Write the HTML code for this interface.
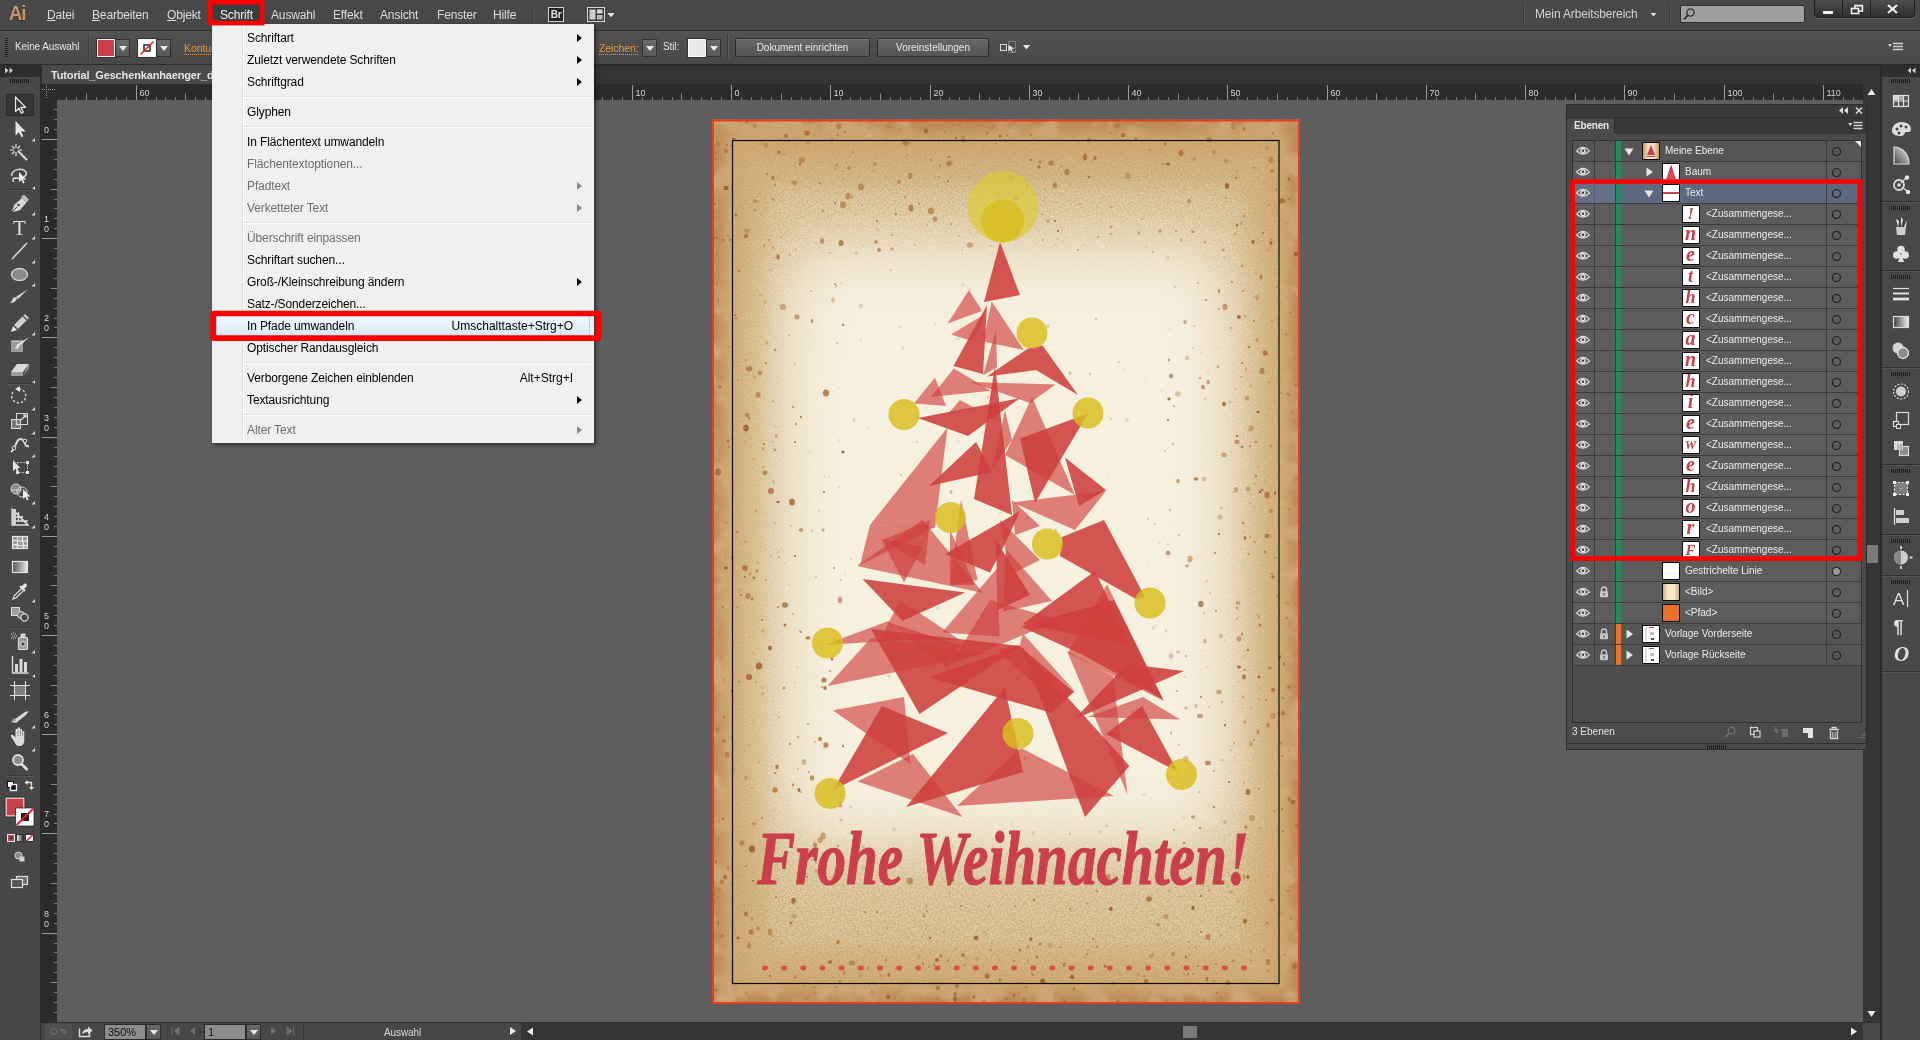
<!DOCTYPE html>
<html lang="de"><head><meta charset="utf-8"><title>Adobe Illustrator – Tutorial_Geschenkanhaenger</title>
<style>
html,body{margin:0;padding:0;}
body{width:1920px;height:1040px;overflow:hidden;background:#5e5e5e;position:relative;font-family:"Liberation Sans",sans-serif;font-size:12px;color:#e0e0e0;}
.a{position:absolute;}
svg{position:absolute;overflow:visible;}

.mb{left:0;top:0;width:1920px;height:30px;background:#484848;border-bottom:1px solid #2c2c2c;}
.mi{position:absolute;top:8px;font-size:12px;color:#dcdcdc;white-space:nowrap;line-height:15px;letter-spacing:-0.15px;}
.mi u{text-decoration:underline;text-underline-offset:1px;}
.cb{left:0;top:31px;width:1920px;height:33px;background:linear-gradient(#525252,#484848);border-bottom:1px solid #2a2a2a;}
.ct{position:absolute;font-size:10px;color:#e4e4e4;white-space:nowrap;line-height:12px;letter-spacing:-0.1px;}
.or{color:#e8963a;border-bottom:1px dotted #e8963a;}
.dd{position:absolute;background:linear-gradient(#6a6a6a,#585858);border:1px solid #2e2e2e;box-sizing:border-box;}
.dd:after{content:"";position:absolute;left:50%;top:50%;margin:-2px 0 0 -4px;border:4px solid transparent;border-top:5px solid #e8e8e8;border-bottom:0;}
.btn{position:absolute;top:38px;height:19px;box-sizing:border-box;border:1px solid #2b2b2b;border-radius:2px;background:linear-gradient(#676767,#555);color:#e8e8e8;font-size:10px;line-height:17px;text-align:center;box-shadow:inset 0 1px 0 #7a7a7a;}
.tabstrip{left:41px;top:65px;width:1841px;height:19px;background:#343434;}
.tab{left:42px;top:65px;width:290px;height:19px;background:#4a4a4a;}
.tabt{left:51px;top:69px;font-size:11px;font-weight:bold;color:#e6e6e6;white-space:nowrap;line-height:13px;letter-spacing:-0.15px;}
.rul{background:#2b2b2b;}
.rl{position:absolute;font-size:9px;color:#c4c4c4;line-height:9px;}
.vsb{left:1863px;top:84px;width:17px;height:939px;background:#353535;}
.hsb{left:521px;top:1023px;width:1342px;height:17px;background:#353535;}
.sbar{left:41px;top:1023px;width:480px;height:17px;background:#474747;}
.fld{position:absolute;background:#8c8c8c;color:#111;font-size:11px;line-height:15px;box-sizing:border-box;border:1px solid #2c2c2c;padding-left:3px;}
.dock{left:1882px;top:65px;width:38px;height:975px;background:#484848;}


.tb{left:0;top:65px;width:40px;height:975px;background:#474747;border-right:1px solid #2b2b2b;}
.tbh{left:0;top:65px;width:40px;height:12px;background:#2e2e2e;}


.menu{left:212px;top:24px;width:382px;height:419px;box-sizing:border-box;background:#f0f0f0;border:1px solid #ececec;box-shadow:2px 2px 4px rgba(0,0,0,.5);}
.mgut{position:absolute;left:29px;top:2px;width:1px;height:413px;background:#e0e0e0;border-right:1px solid #fff;}
.mit{position:absolute;left:34px;font-size:12px;line-height:22px;height:22px;color:#000;white-space:nowrap;letter-spacing:-0.12px;}
.mit.dis{color:#6d6d6d;}
.msc{position:absolute;right:20px;font-size:12px;line-height:22px;height:22px;color:#000;white-space:nowrap;text-align:right;}
.msep{position:absolute;left:31px;width:347px;height:1px;background:#e0e0e0;border-bottom:1px solid #fff;}
.marr{position:absolute;left:364px;width:0;height:0;border:4px solid transparent;border-left:5px solid #000;border-right:0;}
.marr.dis{border-left-color:#8a8a8a;}
.mhl{position:absolute;left:3px;width:374px;height:22px;box-sizing:border-box;border:1px solid #aecff7;border-radius:3px;background:linear-gradient(#f3f8fe,#dbe8f9);}
.redbox{position:absolute;box-sizing:border-box;border:4px solid #ff0000;}


.lp{left:1566px;top:104px;width:301px;height:646px;background:#4b4b4b;box-sizing:border-box;border:1px solid #2b2b2b;}
.lph{left:1567px;top:105px;width:299px;height:12px;background:#3a3a3a;}
.lpt{left:1567px;top:117px;width:299px;height:17px;background:#383838;border-top:1px solid #2e2e2e;box-sizing:border-box;}
.lptab{left:1567px;top:118px;width:47px;height:16px;background:#4b4b4b;border-right:1px solid #2e2e2e;}
.lpl{left:1572px;top:140px;width:290px;height:583px;box-sizing:border-box;border:1px solid #303030;background:#4e4e4e;}
.lr{position:absolute;left:1573px;width:288px;height:21px;box-sizing:border-box;border-bottom:1px solid #3c3c3c;background:#5c5c5c;}
.lr.sel{background:#5c697f;}
.lr i{position:absolute;top:0;height:20px;display:block;}
.lt{position:absolute;font-size:10px;color:#ececec;white-space:nowrap;line-height:12px;letter-spacing:0px;}
.th{position:absolute;width:18px;height:18px;box-sizing:border-box;border:1px solid #0c0c0c;background:#fff;overflow:hidden;text-align:center;color:#c9404a;font-family:"Liberation Serif",serif;font-style:italic;font-weight:bold;font-size:19px;line-height:14px;}

</style></head><body><div id="app" style="position:absolute;left:0;top:0;width:1920px;height:1040px;will-change:transform">

<div class="a mb"></div>
<div class="a" style="left:9px;top:0px;font-size:21px;line-height:26px;color:#c9976b;font-weight:bold;letter-spacing:-1.2px;text-shadow:0 1px 0 #2a2a2a;transform:scaleX(.88);transform-origin:0 0">Ai</div>
<div class="mi" style="left:47px"><u>D</u>atei</div><div class="mi" style="left:92px"><u>B</u>earbeiten</div><div class="mi" style="left:167px"><u>O</u>bjekt</div><div class="mi" style="left:220px">Schrift</div><div class="mi" style="left:271px">Auswahl</div><div class="mi" style="left:333px">Effekt</div><div class="mi" style="left:380px">Ansicht</div><div class="mi" style="left:437px">Fenster</div><div class="mi" style="left:493px">Hilfe</div>
<div class="a" style="left:532px;top:4px;width:1px;height:22px;background:#3a3a3a;border-right:1px solid #565656"></div>
<div class="a" style="left:548px;top:7px;width:16px;height:15px;box-sizing:border-box;border:1px solid #cfcfcf;background:#262626;color:#e0e0e0;font-size:10px;line-height:13px;text-align:center;font-weight:bold;letter-spacing:-0.3px">Br</div>
<svg class="a" style="left:587px;top:7px" width="30" height="16"><rect x="0.5" y="0.5" width="17" height="14" fill="#3a3a3a" stroke="#d8d8d8"/><rect x="2.5" y="2.5" width="6" height="10" fill="#cfcfcf"/><rect x="10" y="2.5" width="5.5" height="4" fill="#d8d8d8"/><rect x="10" y="8" width="5.5" height="4.5" fill="#bdbdbd"/><path d="M20.5 6h7l-3.5 4.5z" fill="#e6e6e6"/></svg>
<div class="a" style="left:1523px;top:4px;width:1px;height:22px;background:#3a3a3a;border-right:1px solid #565656"></div>
<div class="mi" style="left:1535px;top:7px;color:#d2d2d2">Mein Arbeitsbereich</div>
<svg class="a" style="left:1650px;top:12px" width="8" height="6"><path d="M0.5 1h6l-3 3.5z" fill="#dcdcdc"/></svg>
<div class="a" style="left:1669px;top:4px;width:1px;height:22px;background:#3a3a3a;border-right:1px solid #565656"></div>
<div class="a" style="left:1680px;top:5px;width:125px;height:18px;box-sizing:border-box;background:#9f9f9f;border:1px solid #2e2e2e;border-radius:2px"></div>
<svg class="a" style="left:1682px;top:7px" width="16" height="15"><circle cx="8.5" cy="5.5" r="3.6" fill="none" stroke="#2c2c2c" stroke-width="1.3"/><path d="M6 8.2L2 12.5" stroke="#2c2c2c" stroke-width="1.8"/></svg>
<div class="a" style="left:1814px;top:-1px;width:101px;height:19px;box-sizing:border-box;background:linear-gradient(#4e4e4e,#2e2e2e);border:1px solid #1e1e1e;border-radius:0 0 4px 4px;box-shadow:0 1px 0 #666"></div>
<div class="a" style="left:1842px;top:0;width:1px;height:17px;background:#1e1e1e"></div>
<div class="a" style="left:1870px;top:0;width:1px;height:17px;background:#1e1e1e"></div>
<svg class="a" style="left:1814px;top:0" width="101" height="18"><rect x="9" y="11" width="10" height="3" fill="#f2f2f2"/><rect x="37.5" y="8.5" width="7" height="5" fill="none" stroke="#f2f2f2" stroke-width="1.6"/><path d="M41 8V5.6h7.4v5.4H45" fill="none" stroke="#f2f2f2" stroke-width="1.6"/><path d="M74 5l9 8M83 5l-9 8" stroke="#f2f2f2" stroke-width="2.2"/></svg>

<div class="a cb"></div>
<svg class="a" style="left:5px;top:37px" width="4" height="22"><path d="M0 1.5h3M0 3.5h3M0 5.5h3M0 7.5h3M0 9.5h3M0 11.5h3M0 13.5h3M0 15.5h3M0 17.5h3M0 19.5h3" stroke="#222" stroke-width="1"/></svg>
<div class="ct" style="left:15px;top:41px">Keine Auswahl</div>
<div class="a" style="left:88px;top:34px;width:1px;height:26px;background:#3a3a3a;border-right:1px solid #5a5a5a"></div>
<div class="a" style="left:97px;top:39px;width:18px;height:18px;box-sizing:border-box;background:#c9404a;border:1px solid #f4f4f4;outline:1px solid #333"></div>
<div class="dd" style="left:115px;top:39px;width:15px;height:18px"></div>
<div class="a" style="left:138px;top:39px;width:18px;height:18px;box-sizing:border-box;background:#fff;border:1px solid #f4f4f4;outline:1px solid #333"></div>
<svg class="a" style="left:138px;top:39px" width="18" height="18"><rect x="6" y="6" width="6" height="6" fill="none" stroke="#1a1a1a" stroke-width="1.4"/><path d="M2.5 15.5L15.5 2.5" stroke="#e0202a" stroke-width="1.6"/></svg>
<div class="dd" style="left:156px;top:39px;width:15px;height:18px"></div>
<div class="ct or" style="left:184px;top:42px;font-size:10.5px">Kontur:</div>
<div class="ct or" style="left:599px;top:42px;font-size:10.5px">Zeichen:</div>
<div class="dd" style="left:642px;top:39px;width:15px;height:18px"></div>
<div class="ct" style="left:663px;top:41px">Stil:</div>
<div class="a" style="left:688px;top:39px;width:18px;height:18px;box-sizing:border-box;background:#e9e9e9;border:1px solid #fafafa;outline:1px solid #333"></div>
<div class="dd" style="left:706px;top:39px;width:15px;height:18px"></div>
<div class="a" style="left:727px;top:34px;width:1px;height:26px;background:#3a3a3a;border-right:1px solid #5a5a5a"></div>
<div class="btn" style="left:735px;width:135px">Dokument einrichten</div>
<div class="btn" style="left:877px;width:112px">Voreinstellungen</div>
<svg class="a" style="left:999px;top:39px" width="34" height="18"><rect x="1.5" y="5.5" width="6" height="6" fill="none" stroke="#d8d8d8"/><rect x="9.5" y="2.5" width="7" height="11" fill="none" stroke="#9a9a9a" stroke-dasharray="2 1"/><path d="M9 5l7 5-3 .5 1.5 3-1.4.7-1.5-3L9 13z" fill="#e8e8e8" stroke="#333" stroke-width=".5"/><path d="M24 6h7l-3.500 4.500z" fill="#e6e6e6"/></svg>
<svg class="a" style="left:1888px;top:42px" width="16" height="10"><path d="M0 2h4l-2 3z" fill="#d0d0d0"/><path d="M5 1.500h10M5 4.500h10M5 7.500h10" stroke="#d0d0d0" stroke-width="1.400"/></svg>

<div class="a tabstrip"></div>
<div class="a tab"></div>
<div class="a tabt">Tutorial_Geschenkanhaenger_dunkel.ai* bei 350 % (CMYK/Vorschau)</div>
<div class="a rul" style="left:41px;top:84px;width:1822px;height:16px"></div>
<div class="a rul" style="left:41px;top:100px;width:16px;height:923px"></div>
<svg class="a" style="left:41px;top:84px" width="16" height="16"><path d="M5.500 1v14M1 5.500h14" stroke="#9a9a9a" stroke-dasharray="1 1"/></svg>
<svg class="a" style="left:0;top:84px" width="1920" height="16" viewBox="0 84 1920 16"><path d="M136.5 85V100M235.5 85V100M334.5 85V100M433.5 85V100M533.5 85V100M632.5 85V100M731.5 85V100M830.5 85V100M930.5 85V100M1029.5 85V100M1128.5 85V100M1227.5 85V100M1327.5 85V100M1426.5 85V100M1525.5 85V100M1624.5 85V100M1724.5 85V100M1823.5 85V100" stroke="#9a9a9a" stroke-width="1" fill="none"/><path d="M86.5 93.5V100M185.5 93.5V100M285.5 93.5V100M384.5 93.5V100M483.5 93.5V100M582.5 93.5V100M681.5 93.5V100M781.5 93.5V100M880.5 93.5V100M979.5 93.5V100M1078.5 93.5V100M1178.5 93.5V100M1277.5 93.5V100M1376.5 93.5V100M1475.5 93.5V100M1575.5 93.5V100M1674.5 93.5V100M1773.5 93.5V100" stroke="#8a8a8a" stroke-width="1" fill="none"/><path d="M66.5 97V100M76.5 97V100M96.5 97V100M106.5 97V100M116.5 97V100M126.5 97V100M146.5 97V100M156.5 97V100M165.5 97V100M175.5 97V100M195.5 97V100M205.5 97V100M215.5 97V100M225.5 97V100M245.5 97V100M255.5 97V100M265.5 97V100M275.5 97V100M294.5 97V100M304.5 97V100M314.5 97V100M324.5 97V100M344.5 97V100M354.5 97V100M364.5 97V100M374.5 97V100M394.5 97V100M404.5 97V100M414.5 97V100M423.5 97V100M443.5 97V100M453.5 97V100M463.5 97V100M473.5 97V100M493.5 97V100M503.5 97V100M513.5 97V100M523.5 97V100M543.5 97V100M552.5 97V100M562.5 97V100M572.5 97V100M592.5 97V100M602.5 97V100M612.5 97V100M622.5 97V100M642.5 97V100M652.5 97V100M662.5 97V100M672.5 97V100M691.5 97V100M701.5 97V100M711.5 97V100M721.5 97V100M741.5 97V100M751.5 97V100M761.5 97V100M771.5 97V100M791.5 97V100M801.5 97V100M810.5 97V100M820.5 97V100M840.5 97V100M850.5 97V100M860.5 97V100M870.5 97V100M890.5 97V100M900.5 97V100M910.5 97V100M920.5 97V100M940.5 97V100M949.5 97V100M959.5 97V100M969.5 97V100M989.5 97V100M999.5 97V100M1009.5 97V100M1019.5 97V100M1039.5 97V100M1049.5 97V100M1059.5 97V100M1069.5 97V100M1088.5 97V100M1098.5 97V100M1108.5 97V100M1118.5 97V100M1138.5 97V100M1148.5 97V100M1158.5 97V100M1168.5 97V100M1188.5 97V100M1198.5 97V100M1207.5 97V100M1217.5 97V100M1237.5 97V100M1247.5 97V100M1257.5 97V100M1267.5 97V100M1287.5 97V100M1297.5 97V100M1307.5 97V100M1317.5 97V100M1336.5 97V100M1346.5 97V100M1356.5 97V100M1366.5 97V100M1386.5 97V100M1396.5 97V100M1406.5 97V100M1416.5 97V100M1436.5 97V100M1446.5 97V100M1456.5 97V100M1465.5 97V100M1485.5 97V100M1495.5 97V100M1505.5 97V100M1515.5 97V100M1535.5 97V100M1545.5 97V100M1555.5 97V100M1565.5 97V100M1585.5 97V100M1594.5 97V100M1604.5 97V100M1614.5 97V100M1634.5 97V100M1644.5 97V100M1654.5 97V100M1664.5 97V100M1684.5 97V100M1694.5 97V100M1704.5 97V100M1714.5 97V100M1733.5 97V100M1743.5 97V100M1753.5 97V100M1763.5 97V100M1783.5 97V100M1793.5 97V100M1803.5 97V100M1813.5 97V100M1833.5 97V100M1843.5 97V100M1853.5 97V100" stroke="#7c7c7c" stroke-width="1" fill="none"/><text x="139.5" y="96" font-size="9" fill="#d6d6d6" font-family="Liberation Sans, sans-serif">60</text><text x="238.5" y="96" font-size="9" fill="#d6d6d6" font-family="Liberation Sans, sans-serif">50</text><text x="337.5" y="96" font-size="9" fill="#d6d6d6" font-family="Liberation Sans, sans-serif">40</text><text x="436.5" y="96" font-size="9" fill="#d6d6d6" font-family="Liberation Sans, sans-serif">30</text><text x="536.5" y="96" font-size="9" fill="#d6d6d6" font-family="Liberation Sans, sans-serif">20</text><text x="635.5" y="96" font-size="9" fill="#d6d6d6" font-family="Liberation Sans, sans-serif">10</text><text x="734.5" y="96" font-size="9" fill="#d6d6d6" font-family="Liberation Sans, sans-serif">0</text><text x="833.5" y="96" font-size="9" fill="#d6d6d6" font-family="Liberation Sans, sans-serif">10</text><text x="933.5" y="96" font-size="9" fill="#d6d6d6" font-family="Liberation Sans, sans-serif">20</text><text x="1032.5" y="96" font-size="9" fill="#d6d6d6" font-family="Liberation Sans, sans-serif">30</text><text x="1131.5" y="96" font-size="9" fill="#d6d6d6" font-family="Liberation Sans, sans-serif">40</text><text x="1230.5" y="96" font-size="9" fill="#d6d6d6" font-family="Liberation Sans, sans-serif">50</text><text x="1330.5" y="96" font-size="9" fill="#d6d6d6" font-family="Liberation Sans, sans-serif">60</text><text x="1429.5" y="96" font-size="9" fill="#d6d6d6" font-family="Liberation Sans, sans-serif">70</text><text x="1528.5" y="96" font-size="9" fill="#d6d6d6" font-family="Liberation Sans, sans-serif">80</text><text x="1627.5" y="96" font-size="9" fill="#d6d6d6" font-family="Liberation Sans, sans-serif">90</text><text x="1727.5" y="96" font-size="9" fill="#d6d6d6" font-family="Liberation Sans, sans-serif">100</text><text x="1826.5" y="96" font-size="9" fill="#d6d6d6" font-family="Liberation Sans, sans-serif">110</text></svg>
<svg class="a" style="left:41px;top:0" width="16" height="1040" viewBox="41 0 16 1040"><path d="M42 139.5H57M42 238.5H57M42 337.5H57M42 437.5H57M42 536.5H57M42 635.5H57M42 734.5H57M42 833.5H57M42 933.5H57" stroke="#9a9a9a" stroke-width="1" fill="none"/><path d="M51 189.5H57M51 288.5H57M51 387.5H57M51 486.5H57M51 585.5H57M51 685.5H57M51 784.5H57M51 883.5H57M51 982.5H57" stroke="#8a8a8a" stroke-width="1" fill="none"/><path d="M54 109.5H57M54 119.5H57M54 129.5H57M54 149.5H57M54 159.5H57M54 169.5H57M54 179.5H57M54 199.5H57M54 208.5H57M54 218.5H57M54 228.5H57M54 248.5H57M54 258.5H57M54 268.5H57M54 278.5H57M54 298.5H57M54 308.5H57M54 318.5H57M54 327.5H57M54 347.5H57M54 357.5H57M54 367.5H57M54 377.5H57M54 397.5H57M54 407.5H57M54 417.5H57M54 427.5H57M54 447.5H57M54 456.5H57M54 466.5H57M54 476.5H57M54 496.5H57M54 506.5H57M54 516.5H57M54 526.5H57M54 546.5H57M54 556.5H57M54 566.5H57M54 575.5H57M54 595.5H57M54 605.5H57M54 615.5H57M54 625.5H57M54 645.5H57M54 655.5H57M54 665.5H57M54 675.5H57M54 695.5H57M54 704.5H57M54 714.5H57M54 724.5H57M54 744.5H57M54 754.5H57M54 764.5H57M54 774.5H57M54 794.5H57M54 804.5H57M54 814.5H57M54 823.5H57M54 843.5H57M54 853.5H57M54 863.5H57M54 873.5H57M54 893.5H57M54 903.5H57M54 913.5H57M54 923.5H57M54 943.5H57M54 952.5H57M54 962.5H57M54 972.5H57M54 992.5H57M54 1002.5H57M54 1012.5H57" stroke="#7c7c7c" stroke-width="1" fill="none"/><text x="44" y="133.0" font-size="9" fill="#d6d6d6" font-family="Liberation Sans, sans-serif">0</text><text x="44" y="222.4" font-size="9" fill="#d6d6d6" font-family="Liberation Sans, sans-serif">1</text><text x="44" y="232.0" font-size="9" fill="#d6d6d6" font-family="Liberation Sans, sans-serif">0</text><text x="44" y="321.4" font-size="9" fill="#d6d6d6" font-family="Liberation Sans, sans-serif">2</text><text x="44" y="331.0" font-size="9" fill="#d6d6d6" font-family="Liberation Sans, sans-serif">0</text><text x="44" y="421.4" font-size="9" fill="#d6d6d6" font-family="Liberation Sans, sans-serif">3</text><text x="44" y="431.0" font-size="9" fill="#d6d6d6" font-family="Liberation Sans, sans-serif">0</text><text x="44" y="520.4" font-size="9" fill="#d6d6d6" font-family="Liberation Sans, sans-serif">4</text><text x="44" y="530.0" font-size="9" fill="#d6d6d6" font-family="Liberation Sans, sans-serif">0</text><text x="44" y="619.4" font-size="9" fill="#d6d6d6" font-family="Liberation Sans, sans-serif">5</text><text x="44" y="629.0" font-size="9" fill="#d6d6d6" font-family="Liberation Sans, sans-serif">0</text><text x="44" y="718.4" font-size="9" fill="#d6d6d6" font-family="Liberation Sans, sans-serif">6</text><text x="44" y="728.0" font-size="9" fill="#d6d6d6" font-family="Liberation Sans, sans-serif">0</text><text x="44" y="817.4" font-size="9" fill="#d6d6d6" font-family="Liberation Sans, sans-serif">7</text><text x="44" y="827.0" font-size="9" fill="#d6d6d6" font-family="Liberation Sans, sans-serif">0</text><text x="44" y="917.4" font-size="9" fill="#d6d6d6" font-family="Liberation Sans, sans-serif">8</text><text x="44" y="927.0" font-size="9" fill="#d6d6d6" font-family="Liberation Sans, sans-serif">0</text></svg>
<div class="a vsb"></div>
<svg class="a" style="left:1863px;top:84px" width="17" height="939"><path d="M4.500 11h8l-4-6z" fill="#ececec"/><path d="M4.500 927h8l-4 6z" fill="#ececec"/><rect x="4" y="461" width="11" height="18" fill="#7a7a7a"/></svg>
<div class="a" style="left:1880px;top:65px;width:2px;height:975px;background:#2a2a2a"></div>
<div class="a hsb"></div>
<svg class="a" style="left:521px;top:1023px" width="1342" height="17"><path d="M12 4.500v8l-6-4z" fill="#ececec"/><path d="M1330 4.500v8l6-4z" fill="#ececec"/><rect x="662" y="3" width="14" height="12" fill="#7a7a7a"/></svg>
<div class="a" style="left:1863px;top:1023px;width:17px;height:17px;background:#4a4a4a"></div>
<div class="a" style="left:41px;top:1022px;width:1839px;height:1px;background:#2e2e2e"></div>
<div class="a sbar"></div>
<svg class="a" style="left:41px;top:1023px" width="480" height="17">
<rect x="4" y="1" width="27" height="15" fill="#505050"/>
<circle cx="13" cy="8.500" r="3" fill="none" stroke="#6c6c6c" stroke-width="2" stroke-dasharray="1.500 1"/><path d="M19 6q4-1 5 2l1.500-1v4l-4-.5 1.500-1q-1-2-4-1.500z" fill="#6c6c6c"/>
<path d="M38.500 5.500v8h10v-4" fill="none" stroke="#dcdcdc" stroke-width="1.400"/><path d="M41 11q1-5 6-5V3.500l4.500 4-4.500 4V9q-3.500 0-6 2z" fill="#dcdcdc"/>
<path d="M108.500 3.500h8l-4 5z" fill="#e6e6e6" transform="translate(0,3)"/>
<path d="M131 4v8M138 4l-5 4 5 4z" fill="#6e6e6e" stroke="#6e6e6e" stroke-width="1"/>
<path d="M154 4l-5 4 5 4z" fill="#6e6e6e"/>
<path d="M208.500 3.500h8l-4 5z" fill="#e6e6e6" transform="translate(0,3)"/>
<path d="M230 4l5 4-5 4z" fill="#6e6e6e"/>
<path d="M246 4l5 4-5 4zM252.500 4v8" fill="#6e6e6e" stroke="#6e6e6e" stroke-width="1"/>
<path d="M469 4v8l6-4z" fill="#ececec"/>
</svg>
<div class="fld" style="left:104px;top:1024px;width:42px;height:16px">350%</div>
<div class="dd" style="left:146px;top:1024px;width:15px;height:16px"></div>
<div class="fld" style="left:204px;top:1024px;width:42px;height:16px">1</div>
<div class="dd" style="left:246px;top:1024px;width:15px;height:16px"></div>
<div class="a" style="left:303px;top:1024px;width:1px;height:16px;background:#383838"></div>
<div class="ct" style="left:384px;top:1027px;color:#d8d8d8">Auswahl</div>


<svg class="a" style="left:0;top:0" width="1920" height="1040" viewBox="0 0 1920 1040">
<defs>
<filter id="b40" x="-20%" y="-20%" width="140%" height="140%"><feGaussianBlur stdDeviation="34"/></filter>
<filter id="grain" x="0" y="0" width="100%" height="100%"><feTurbulence type="fractalNoise" baseFrequency="0.55" numOctaves="2" seed="3"/><feColorMatrix type="matrix" values="0 0 0 0 0.55  0 0 0 0 0.33  0 0 0 0 0.14  0 0 0 -5 2.9"/></filter>
<filter id="mott" x="0" y="0" width="100%" height="100%"><feTurbulence type="fractalNoise" baseFrequency="0.035" numOctaves="3" seed="8"/><feColorMatrix type="matrix" values="0 0 0 0 0.88  0 0 0 0 0.74  0 0 0 0 0.52  0 0 0 4 -1.7"/></filter>
<filter id="b6" x="-20%" y="-20%" width="140%" height="140%"><feGaussianBlur stdDeviation="6"/></filter>
<filter id="b14" x="-20%" y="-20%" width="140%" height="140%"><feGaussianBlur stdDeviation="10"/></filter>
<clipPath id="abc"><rect x="712" y="119.5" width="588" height="884.5"/></clipPath>
</defs>
<g clip-path="url(#abc)">
<rect x="712" y="119.5" width="588" height="884.5" fill="#b9844d"/>
<rect x="712" y="119.5" width="588" height="884.5" filter="url(#mott)" opacity=".4"/>
<rect x="723" y="131.5" width="566" height="860.5" fill="#cea771" filter="url(#b6)"/>
<rect x="740" y="151.5" width="532" height="824.5" fill="#d4b580" filter="url(#b14)"/>
<rect x="768" y="185.5" width="476" height="762.5" fill="#dcc89f" filter="url(#b14)"/>
<rect x="712" y="119.5" width="588" height="884.5" filter="url(#grain)" opacity=".5"/>
<rect x="784" y="239.5" width="444" height="609.5" fill="#f5eedb" filter="url(#b40)"/>
<rect x="810" y="294.5" width="392" height="499.5" fill="#f6f0de" filter="url(#b40)"/>
<g fill="#a86a30" opacity=".5"><ellipse cx="756" cy="593" rx="0.4" ry="0.5"/><ellipse cx="1158" cy="925" rx="1.9" ry="1.9"/><ellipse cx="750" cy="366" rx="0.6" ry="0.9"/><ellipse cx="760" cy="193" rx="0.6" ry="0.8"/><ellipse cx="738" cy="380" rx="1.0" ry="0.8"/><ellipse cx="1198" cy="283" rx="1.0" ry="0.9"/><ellipse cx="1017" cy="208" rx="0.6" ry="0.7"/><ellipse cx="754" cy="824" rx="2.4" ry="2.0"/><ellipse cx="1238" cy="901" rx="1.1" ry="1.1"/><ellipse cx="877" cy="229" rx="0.8" ry="0.7"/><ellipse cx="1272" cy="574" rx="1.2" ry="1.4"/><ellipse cx="1233" cy="492" rx="0.8" ry="0.8"/><ellipse cx="934" cy="965" rx="1.1" ry="1.3"/><ellipse cx="1248" cy="489" rx="2.4" ry="2.3"/><ellipse cx="950" cy="163" rx="2.6" ry="2.4"/><ellipse cx="939" cy="177" rx="1.2" ry="0.9"/><ellipse cx="913" cy="933" rx="0.6" ry="0.6"/><ellipse cx="752" cy="788" rx="0.9" ry="0.8"/><ellipse cx="724" cy="298" rx="0.5" ry="0.6"/><ellipse cx="1190" cy="559" rx="2.7" ry="3.2"/><ellipse cx="753" cy="653" rx="1.0" ry="0.8"/><ellipse cx="1163" cy="128" rx="0.6" ry="0.7"/><ellipse cx="896" cy="185" rx="0.5" ry="0.7"/><ellipse cx="1257" cy="299" rx="1.0" ry="1.3"/><ellipse cx="720" cy="889" rx="0.9" ry="1.4"/><ellipse cx="925" cy="935" rx="0.5" ry="0.7"/><ellipse cx="1040" cy="944" rx="2.0" ry="2.0"/><ellipse cx="1139" cy="233" rx="1.5" ry="1.7"/><ellipse cx="781" cy="404" rx="0.4" ry="0.6"/><ellipse cx="823" cy="836" rx="2.9" ry="3.5"/><ellipse cx="817" cy="850" rx="0.5" ry="0.7"/><ellipse cx="1267" cy="876" rx="0.8" ry="0.8"/><ellipse cx="760" cy="882" rx="0.8" ry="0.8"/><ellipse cx="763" cy="467" rx="0.9" ry="1.1"/><ellipse cx="1233" cy="961" rx="1.7" ry="1.3"/><ellipse cx="1256" cy="442" rx="1.7" ry="1.4"/><ellipse cx="838" cy="846" rx="1.2" ry="1.3"/><ellipse cx="823" cy="530" rx="1.6" ry="1.7"/><ellipse cx="1169" cy="891" rx="1.0" ry="0.9"/><ellipse cx="749" cy="176" rx="0.6" ry="0.6"/><ellipse cx="794" cy="900" rx="2.5" ry="2.4"/><ellipse cx="1241" cy="761" rx="0.7" ry="0.6"/><ellipse cx="1007" cy="135" rx="1.4" ry="1.4"/><ellipse cx="739" cy="682" rx="1.2" ry="1.4"/><ellipse cx="1268" cy="165" rx="0.7" ry="0.9"/><ellipse cx="796" cy="953" rx="0.7" ry="0.9"/><ellipse cx="737" cy="506" rx="0.6" ry="0.8"/><ellipse cx="752" cy="919" rx="1.4" ry="1.7"/><ellipse cx="1291" cy="622" rx="0.7" ry="0.6"/><ellipse cx="1224" cy="455" rx="2.6" ry="2.4"/><ellipse cx="874" cy="983" rx="1.3" ry="1.6"/></g><g fill="#a3622c" opacity=".5"><ellipse cx="755" cy="201" rx="1.8" ry="2.0"/><ellipse cx="750" cy="637" rx="0.7" ry="0.7"/><ellipse cx="1291" cy="962" rx="0.8" ry="0.8"/><ellipse cx="917" cy="137" rx="0.5" ry="0.5"/><ellipse cx="731" cy="484" rx="0.5" ry="0.6"/><ellipse cx="1268" cy="250" rx="0.8" ry="1.0"/><ellipse cx="852" cy="963" rx="3.2" ry="2.4"/><ellipse cx="838" cy="709" rx="0.8" ry="0.8"/><ellipse cx="975" cy="144" rx="0.9" ry="0.7"/><ellipse cx="1235" cy="389" rx="0.8" ry="0.8"/><ellipse cx="872" cy="895" rx="0.5" ry="0.6"/><ellipse cx="1239" cy="639" rx="2.5" ry="2.7"/><ellipse cx="984" cy="1002" rx="2.0" ry="2.1"/><ellipse cx="1032" cy="974" rx="1.2" ry="1.4"/><ellipse cx="1219" cy="692" rx="2.8" ry="2.3"/><ellipse cx="1187" cy="892" rx="0.6" ry="0.8"/><ellipse cx="1223" cy="250" rx="1.7" ry="1.4"/><ellipse cx="1224" cy="544" rx="0.5" ry="0.7"/><ellipse cx="718" cy="302" rx="0.7" ry="0.7"/><ellipse cx="738" cy="533" rx="0.5" ry="0.7"/><ellipse cx="1174" cy="867" rx="1.0" ry="1.4"/><ellipse cx="1028" cy="947" rx="1.3" ry="1.8"/><ellipse cx="729" cy="447" rx="1.4" ry="1.4"/><ellipse cx="1244" cy="216" rx="1.4" ry="1.3"/><ellipse cx="948" cy="958" rx="0.7" ry="0.6"/><ellipse cx="907" cy="155" rx="0.8" ry="0.9"/><ellipse cx="991" cy="246" rx="0.7" ry="1.0"/><ellipse cx="823" cy="211" rx="1.4" ry="1.6"/><ellipse cx="749" cy="945" rx="1.6" ry="2.2"/><ellipse cx="843" cy="885" rx="0.8" ry="0.9"/><ellipse cx="822" cy="687" rx="1.2" ry="1.1"/><ellipse cx="906" cy="882" rx="0.7" ry="0.8"/><ellipse cx="795" cy="183" rx="2.3" ry="2.3"/><ellipse cx="1271" cy="511" rx="2.1" ry="2.2"/><ellipse cx="1208" cy="382" rx="1.8" ry="2.3"/><ellipse cx="905" cy="197" rx="0.9" ry="1.2"/><ellipse cx="1079" cy="877" rx="0.5" ry="0.5"/><ellipse cx="1202" cy="651" rx="0.5" ry="0.8"/><ellipse cx="999" cy="877" rx="1.0" ry="1.5"/><ellipse cx="840" cy="982" rx="1.4" ry="2.3"/><ellipse cx="1245" cy="656" rx="0.6" ry="0.8"/><ellipse cx="737" cy="532" rx="1.3" ry="1.6"/><ellipse cx="1289" cy="199" rx="1.1" ry="1.3"/><ellipse cx="769" cy="240" rx="1.5" ry="1.2"/><ellipse cx="1088" cy="950" rx="1.2" ry="1.0"/><ellipse cx="802" cy="160" rx="3.1" ry="2.7"/><ellipse cx="1175" cy="287" rx="0.7" ry="0.9"/><ellipse cx="1189" cy="201" rx="1.8" ry="2.3"/><ellipse cx="904" cy="142" rx="2.3" ry="2.7"/><ellipse cx="763" cy="449" rx="1.1" ry="1.4"/><ellipse cx="1245" cy="722" rx="1.9" ry="1.6"/><ellipse cx="845" cy="132" rx="1.4" ry="1.7"/><ellipse cx="1199" cy="792" rx="0.8" ry="0.9"/><ellipse cx="1189" cy="942" rx="1.0" ry="1.3"/><ellipse cx="1185" cy="322" rx="1.7" ry="2.0"/><ellipse cx="1218" cy="367" rx="1.2" ry="1.4"/><ellipse cx="1257" cy="424" rx="0.6" ry="0.6"/><ellipse cx="756" cy="682" rx="0.8" ry="1.1"/><ellipse cx="1285" cy="955" rx="0.9" ry="1.1"/><ellipse cx="717" cy="284" rx="0.9" ry="1.4"/></g><g fill="#b0703a" opacity=".3"><ellipse cx="931" cy="604" rx="0.5" ry="0.6"/><ellipse cx="991" cy="706" rx="1.6" ry="1.9"/><ellipse cx="889" cy="676" rx="1.7" ry="1.3"/><ellipse cx="894" cy="829" rx="1.9" ry="1.5"/><ellipse cx="988" cy="397" rx="1.2" ry="1.4"/><ellipse cx="964" cy="268" rx="0.5" ry="0.5"/><ellipse cx="1119" cy="362" rx="1.0" ry="1.2"/><ellipse cx="1048" cy="326" rx="1.8" ry="2.1"/><ellipse cx="1089" cy="440" rx="0.6" ry="0.8"/><ellipse cx="938" cy="608" rx="1.2" ry="1.2"/><ellipse cx="863" cy="847" rx="2.0" ry="1.7"/><ellipse cx="1020" cy="866" rx="1.6" ry="1.7"/></g><g fill="#9a5a28" opacity=".5"><ellipse cx="986" cy="935" rx="0.7" ry="0.8"/><ellipse cx="1289" cy="872" rx="1.0" ry="1.0"/><ellipse cx="1281" cy="470" rx="0.7" ry="0.5"/><ellipse cx="861" cy="187" rx="2.9" ry="3.6"/><ellipse cx="1000" cy="980" rx="1.6" ry="1.9"/><ellipse cx="1155" cy="976" rx="0.7" ry="0.8"/><ellipse cx="1033" cy="975" rx="0.9" ry="1.0"/><ellipse cx="1130" cy="141" rx="0.6" ry="0.6"/><ellipse cx="853" cy="152" rx="1.1" ry="0.9"/><ellipse cx="780" cy="140" rx="0.8" ry="0.8"/><ellipse cx="730" cy="240" rx="1.3" ry="1.7"/><ellipse cx="829" cy="477" rx="0.8" ry="0.6"/><ellipse cx="1265" cy="552" rx="1.4" ry="1.6"/><ellipse cx="798" cy="769" rx="0.8" ry="0.7"/><ellipse cx="831" cy="122" rx="1.1" ry="0.9"/><ellipse cx="1245" cy="268" rx="0.6" ry="0.6"/><ellipse cx="1297" cy="241" rx="0.5" ry="0.4"/><ellipse cx="1193" cy="817" rx="2.1" ry="1.7"/><ellipse cx="840" cy="600" rx="2.3" ry="3.5"/><ellipse cx="1117" cy="141" rx="0.5" ry="0.5"/><ellipse cx="1151" cy="878" rx="0.7" ry="0.5"/><ellipse cx="996" cy="143" rx="0.8" ry="0.9"/><ellipse cx="808" cy="724" rx="1.2" ry="1.1"/><ellipse cx="1268" cy="725" rx="2.0" ry="2.5"/><ellipse cx="1031" cy="135" rx="1.2" ry="0.9"/><ellipse cx="1221" cy="508" rx="1.1" ry="1.0"/><ellipse cx="987" cy="133" rx="1.4" ry="1.6"/><ellipse cx="1142" cy="219" rx="0.9" ry="1.0"/><ellipse cx="798" cy="737" rx="1.1" ry="1.5"/><ellipse cx="773" cy="860" rx="0.4" ry="0.5"/><ellipse cx="1218" cy="347" rx="0.6" ry="0.6"/><ellipse cx="772" cy="936" rx="0.4" ry="0.6"/><ellipse cx="1003" cy="880" rx="0.5" ry="0.7"/><ellipse cx="1225" cy="307" rx="2.7" ry="3.1"/><ellipse cx="1251" cy="708" rx="0.7" ry="0.7"/><ellipse cx="765" cy="732" rx="0.5" ry="0.5"/><ellipse cx="976" cy="969" rx="0.8" ry="1.1"/><ellipse cx="822" cy="241" rx="2.1" ry="2.9"/><ellipse cx="1061" cy="166" rx="0.8" ry="0.9"/><ellipse cx="775" cy="523" rx="0.6" ry="1.0"/><ellipse cx="1238" cy="617" rx="0.5" ry="0.6"/><ellipse cx="801" cy="530" rx="2.4" ry="1.9"/><ellipse cx="1239" cy="682" rx="0.6" ry="0.4"/><ellipse cx="839" cy="126" rx="2.7" ry="3.2"/><ellipse cx="1287" cy="249" rx="0.5" ry="0.6"/><ellipse cx="732" cy="282" rx="0.9" ry="0.7"/><ellipse cx="910" cy="176" rx="2.1" ry="3.2"/><ellipse cx="899" cy="182" rx="1.9" ry="1.9"/><ellipse cx="1174" cy="830" rx="1.1" ry="1.0"/><ellipse cx="1226" cy="198" rx="0.9" ry="0.9"/><ellipse cx="1187" cy="566" rx="1.8" ry="1.6"/><ellipse cx="1055" cy="184" rx="1.4" ry="1.8"/><ellipse cx="1282" cy="756" rx="1.1" ry="1.1"/><ellipse cx="892" cy="235" rx="0.9" ry="0.9"/><ellipse cx="1268" cy="962" rx="2.4" ry="3.2"/><ellipse cx="779" cy="557" rx="0.8" ry="1.3"/><ellipse cx="1177" cy="134" rx="0.6" ry="0.8"/><ellipse cx="1257" cy="340" rx="1.7" ry="1.7"/><ellipse cx="1024" cy="1000" rx="1.3" ry="1.9"/></g><g fill="#b0703a" opacity=".5"><ellipse cx="1070" cy="186" rx="0.9" ry="0.8"/><ellipse cx="808" cy="142" rx="1.6" ry="1.9"/><ellipse cx="767" cy="866" rx="0.7" ry="0.9"/><ellipse cx="838" cy="388" rx="0.6" ry="0.6"/><ellipse cx="1281" cy="393" rx="0.9" ry="1.0"/><ellipse cx="868" cy="968" rx="1.1" ry="1.9"/><ellipse cx="1089" cy="190" rx="0.6" ry="0.7"/><ellipse cx="758" cy="201" rx="0.9" ry="1.0"/><ellipse cx="875" cy="164" rx="1.9" ry="2.1"/><ellipse cx="715" cy="232" rx="0.5" ry="0.6"/><ellipse cx="897" cy="221" rx="0.6" ry="1.0"/><ellipse cx="1190" cy="238" rx="0.5" ry="0.5"/><ellipse cx="1248" cy="839" rx="1.1" ry="0.9"/><ellipse cx="753" cy="459" rx="0.9" ry="0.7"/><ellipse cx="1214" cy="771" rx="1.0" ry="1.3"/><ellipse cx="776" cy="436" rx="1.5" ry="2.0"/><ellipse cx="733" cy="220" rx="0.8" ry="0.6"/><ellipse cx="773" cy="247" rx="1.1" ry="1.3"/><ellipse cx="1285" cy="201" rx="1.4" ry="1.4"/><ellipse cx="939" cy="141" rx="1.0" ry="1.2"/><ellipse cx="967" cy="959" rx="0.7" ry="0.9"/><ellipse cx="1120" cy="979" rx="0.6" ry="0.5"/><ellipse cx="800" cy="631" rx="1.1" ry="1.1"/><ellipse cx="1238" cy="603" rx="2.3" ry="2.0"/><ellipse cx="1294" cy="588" rx="0.7" ry="0.8"/><ellipse cx="1207" cy="667" rx="0.7" ry="0.7"/><ellipse cx="1070" cy="909" rx="1.4" ry="1.7"/><ellipse cx="760" cy="142" rx="0.5" ry="0.7"/><ellipse cx="1096" cy="942" rx="0.8" ry="1.1"/><ellipse cx="868" cy="128" rx="0.9" ry="1.1"/><ellipse cx="970" cy="245" rx="3.2" ry="2.8"/><ellipse cx="1249" cy="554" rx="1.1" ry="1.6"/><ellipse cx="740" cy="751" rx="0.5" ry="0.7"/><ellipse cx="755" cy="377" rx="1.1" ry="1.7"/><ellipse cx="1235" cy="234" rx="1.5" ry="1.7"/><ellipse cx="820" cy="840" rx="2.8" ry="3.1"/><ellipse cx="1194" cy="159" rx="1.7" ry="1.8"/><ellipse cx="783" cy="307" rx="3.2" ry="3.1"/><ellipse cx="811" cy="291" rx="0.8" ry="1.0"/><ellipse cx="1166" cy="917" rx="2.6" ry="2.4"/><ellipse cx="1245" cy="827" rx="0.4" ry="0.6"/><ellipse cx="830" cy="671" rx="1.4" ry="1.1"/><ellipse cx="913" cy="947" rx="0.8" ry="1.0"/><ellipse cx="750" cy="574" rx="1.6" ry="1.2"/><ellipse cx="1269" cy="382" rx="0.9" ry="1.3"/><ellipse cx="1258" cy="479" rx="0.6" ry="0.8"/><ellipse cx="787" cy="954" rx="0.7" ry="0.5"/><ellipse cx="1171" cy="733" rx="1.0" ry="1.7"/><ellipse cx="991" cy="950" rx="1.2" ry="1.3"/><ellipse cx="1130" cy="925" rx="0.5" ry="0.7"/><ellipse cx="789" cy="335" rx="0.9" ry="1.1"/><ellipse cx="1277" cy="596" rx="1.1" ry="1.5"/><ellipse cx="956" cy="949" rx="1.1" ry="1.0"/><ellipse cx="1295" cy="122" rx="0.7" ry="0.9"/><ellipse cx="812" cy="531" rx="0.8" ry="1.1"/><ellipse cx="749" cy="947" rx="1.8" ry="1.7"/><ellipse cx="1205" cy="242" rx="0.9" ry="1.4"/><ellipse cx="940" cy="166" rx="1.2" ry="1.7"/></g><g fill="#b0703a" opacity=".65"><ellipse cx="1276" cy="190" rx="1.1" ry="1.2"/><ellipse cx="1150" cy="150" rx="1.0" ry="0.9"/><ellipse cx="1271" cy="160" rx="2.4" ry="3.2"/><ellipse cx="1209" cy="707" rx="0.8" ry="0.8"/><ellipse cx="758" cy="928" rx="1.8" ry="2.1"/><ellipse cx="839" cy="487" rx="0.6" ry="0.7"/><ellipse cx="773" cy="941" rx="0.8" ry="0.7"/><ellipse cx="1173" cy="954" rx="1.6" ry="2.0"/><ellipse cx="758" cy="395" rx="2.5" ry="2.9"/><ellipse cx="717" cy="730" rx="1.8" ry="2.6"/><ellipse cx="795" cy="146" rx="0.6" ry="0.8"/><ellipse cx="1208" cy="937" rx="2.5" ry="3.1"/><ellipse cx="1224" cy="948" rx="0.8" ry="1.0"/><ellipse cx="1259" cy="699" rx="0.6" ry="0.9"/><ellipse cx="1278" cy="714" rx="0.8" ry="0.9"/><ellipse cx="1175" cy="860" rx="1.4" ry="1.5"/><ellipse cx="1221" cy="998" rx="1.2" ry="1.6"/><ellipse cx="1227" cy="932" rx="0.6" ry="0.7"/><ellipse cx="815" cy="993" rx="1.4" ry="1.0"/><ellipse cx="844" cy="179" rx="0.7" ry="0.7"/><ellipse cx="1216" cy="964" rx="1.1" ry="0.9"/><ellipse cx="1270" cy="409" rx="0.8" ry="0.8"/><ellipse cx="744" cy="905" rx="0.7" ry="0.7"/><ellipse cx="1087" cy="903" rx="1.1" ry="1.0"/><ellipse cx="926" cy="925" rx="0.9" ry="0.8"/><ellipse cx="773" cy="481" rx="0.7" ry="1.0"/><ellipse cx="931" cy="880" rx="1.1" ry="1.2"/><ellipse cx="727" cy="755" rx="2.4" ry="3.3"/><ellipse cx="774" cy="258" rx="0.7" ry="0.8"/><ellipse cx="931" cy="211" rx="3.2" ry="3.3"/><ellipse cx="835" cy="203" rx="1.2" ry="1.6"/><ellipse cx="900" cy="130" rx="1.0" ry="1.2"/><ellipse cx="950" cy="893" rx="0.8" ry="0.9"/><ellipse cx="1178" cy="481" rx="1.8" ry="2.3"/><ellipse cx="804" cy="854" rx="0.5" ry="0.6"/><ellipse cx="1153" cy="954" rx="0.9" ry="1.3"/><ellipse cx="775" cy="450" rx="1.3" ry="1.2"/><ellipse cx="770" cy="932" rx="2.2" ry="3.6"/><ellipse cx="1161" cy="882" rx="0.6" ry="1.0"/><ellipse cx="1114" cy="875" rx="0.8" ry="0.7"/><ellipse cx="835" cy="284" rx="1.3" ry="1.1"/><ellipse cx="1055" cy="186" rx="2.5" ry="2.4"/><ellipse cx="758" cy="563" rx="0.9" ry="1.1"/><ellipse cx="1237" cy="442" rx="2.7" ry="2.2"/><ellipse cx="1028" cy="960" rx="0.8" ry="0.8"/><ellipse cx="1111" cy="227" rx="0.9" ry="1.4"/><ellipse cx="906" cy="143" rx="2.4" ry="2.8"/><ellipse cx="1074" cy="136" rx="0.9" ry="0.6"/><ellipse cx="1214" cy="152" rx="1.8" ry="1.9"/><ellipse cx="748" cy="596" rx="2.5" ry="3.2"/><ellipse cx="843" cy="205" rx="2.9" ry="3.4"/><ellipse cx="848" cy="196" rx="2.4" ry="3.6"/><ellipse cx="745" cy="442" rx="0.7" ry="0.8"/><ellipse cx="1108" cy="877" rx="2.6" ry="3.0"/><ellipse cx="1250" cy="503" rx="0.7" ry="0.7"/><ellipse cx="816" cy="863" rx="0.8" ry="0.9"/><ellipse cx="850" cy="209" rx="0.6" ry="0.6"/><ellipse cx="1078" cy="250" rx="1.0" ry="0.9"/><ellipse cx="840" cy="805" rx="2.2" ry="2.6"/><ellipse cx="766" cy="580" rx="0.9" ry="1.0"/><ellipse cx="760" cy="373" rx="2.5" ry="2.2"/><ellipse cx="1231" cy="328" rx="0.8" ry="1.0"/><ellipse cx="793" cy="614" rx="0.9" ry="1.0"/><ellipse cx="737" cy="614" rx="0.5" ry="0.5"/></g><g fill="#8f5526" opacity=".35"><ellipse cx="727" cy="528" rx="0.5" ry="0.6"/><ellipse cx="1241" cy="377" rx="1.0" ry="1.1"/><ellipse cx="760" cy="295" rx="0.9" ry="0.9"/><ellipse cx="1294" cy="568" rx="0.5" ry="0.7"/><ellipse cx="1247" cy="398" rx="2.5" ry="2.5"/><ellipse cx="1011" cy="178" rx="2.5" ry="2.8"/><ellipse cx="783" cy="835" rx="0.8" ry="1.1"/><ellipse cx="1060" cy="947" rx="1.0" ry="1.3"/><ellipse cx="1267" cy="923" rx="1.9" ry="1.5"/><ellipse cx="920" cy="996" rx="0.6" ry="0.5"/><ellipse cx="723" cy="240" rx="1.9" ry="1.5"/><ellipse cx="1192" cy="230" rx="0.8" ry="1.0"/><ellipse cx="773" cy="199" rx="2.0" ry="1.6"/><ellipse cx="839" cy="954" rx="0.8" ry="0.7"/><ellipse cx="830" cy="253" rx="0.8" ry="1.0"/><ellipse cx="1020" cy="186" rx="0.4" ry="0.5"/><ellipse cx="984" cy="932" rx="0.8" ry="1.0"/><ellipse cx="924" cy="916" rx="2.0" ry="1.8"/><ellipse cx="1231" cy="892" rx="2.1" ry="1.6"/><ellipse cx="935" cy="130" rx="0.5" ry="0.7"/><ellipse cx="1278" cy="830" rx="1.1" ry="1.3"/><ellipse cx="1271" cy="446" rx="1.5" ry="1.8"/><ellipse cx="1268" cy="971" rx="1.6" ry="1.4"/><ellipse cx="945" cy="132" rx="1.0" ry="1.2"/><ellipse cx="1179" cy="168" rx="0.5" ry="0.4"/><ellipse cx="718" cy="897" rx="1.1" ry="1.2"/><ellipse cx="1292" cy="412" rx="1.5" ry="1.4"/><ellipse cx="756" cy="511" rx="1.6" ry="1.6"/><ellipse cx="1297" cy="826" rx="2.1" ry="2.2"/><ellipse cx="796" cy="250" rx="0.8" ry="1.4"/><ellipse cx="901" cy="985" rx="0.5" ry="0.6"/><ellipse cx="1226" cy="161" rx="2.2" ry="2.0"/><ellipse cx="1286" cy="334" rx="1.2" ry="1.2"/><ellipse cx="1128" cy="176" rx="2.7" ry="3.3"/><ellipse cx="1064" cy="943" rx="0.7" ry="0.7"/><ellipse cx="1274" cy="401" rx="1.0" ry="0.7"/><ellipse cx="1127" cy="946" rx="0.8" ry="0.9"/><ellipse cx="1236" cy="490" rx="2.1" ry="2.9"/><ellipse cx="1252" cy="818" rx="2.7" ry="3.3"/><ellipse cx="1214" cy="981" rx="1.2" ry="1.3"/><ellipse cx="1205" cy="399" rx="0.7" ry="0.9"/><ellipse cx="1251" cy="744" rx="1.8" ry="2.2"/><ellipse cx="1249" cy="431" rx="0.7" ry="0.9"/><ellipse cx="792" cy="182" rx="1.5" ry="1.3"/><ellipse cx="1205" cy="641" rx="1.8" ry="2.8"/><ellipse cx="1243" cy="697" rx="1.5" ry="1.5"/><ellipse cx="764" cy="246" rx="1.7" ry="1.4"/></g><g fill="#b0703a" opacity=".8"><ellipse cx="876" cy="242" rx="1.7" ry="1.7"/><ellipse cx="797" cy="667" rx="0.6" ry="0.5"/><ellipse cx="1169" cy="360" rx="0.9" ry="1.4"/><ellipse cx="746" cy="236" rx="2.3" ry="2.3"/><ellipse cx="938" cy="988" rx="2.4" ry="2.4"/><ellipse cx="820" cy="739" rx="2.0" ry="2.2"/><ellipse cx="858" cy="934" rx="0.7" ry="0.6"/><ellipse cx="773" cy="401" rx="0.9" ry="0.7"/><ellipse cx="1280" cy="184" rx="0.8" ry="1.1"/><ellipse cx="1281" cy="377" rx="0.6" ry="0.7"/><ellipse cx="1261" cy="277" rx="1.7" ry="2.6"/><ellipse cx="749" cy="369" rx="3.2" ry="2.4"/><ellipse cx="739" cy="271" rx="1.2" ry="1.3"/><ellipse cx="816" cy="577" rx="0.7" ry="0.7"/><ellipse cx="949" cy="157" rx="1.6" ry="1.3"/><ellipse cx="1266" cy="700" rx="1.0" ry="1.0"/><ellipse cx="1196" cy="479" rx="2.4" ry="1.8"/><ellipse cx="1246" cy="827" rx="1.6" ry="1.6"/><ellipse cx="801" cy="417" rx="1.1" ry="1.3"/><ellipse cx="755" cy="210" rx="1.1" ry="1.1"/><ellipse cx="1179" cy="745" rx="0.8" ry="0.8"/><ellipse cx="1201" cy="353" rx="0.5" ry="0.5"/><ellipse cx="773" cy="178" rx="1.6" ry="2.0"/><ellipse cx="826" cy="745" rx="2.6" ry="2.7"/><ellipse cx="836" cy="987" rx="0.9" ry="1.0"/><ellipse cx="841" cy="795" rx="1.1" ry="1.5"/><ellipse cx="1219" cy="291" rx="1.1" ry="1.9"/><ellipse cx="764" cy="444" rx="1.0" ry="1.3"/><ellipse cx="1298" cy="619" rx="0.9" ry="0.8"/><ellipse cx="1077" cy="144" rx="0.7" ry="0.8"/><ellipse cx="1298" cy="925" rx="0.7" ry="0.6"/><ellipse cx="757" cy="571" rx="1.5" ry="1.7"/><ellipse cx="776" cy="897" rx="0.9" ry="1.3"/><ellipse cx="1210" cy="593" rx="0.7" ry="0.8"/><ellipse cx="741" cy="205" rx="0.6" ry="0.8"/><ellipse cx="1277" cy="287" rx="0.7" ry="1.1"/><ellipse cx="775" cy="790" rx="2.7" ry="2.7"/><ellipse cx="1295" cy="421" rx="0.8" ry="1.1"/><ellipse cx="849" cy="204" rx="0.5" ry="0.6"/><ellipse cx="843" cy="325" rx="1.2" ry="1.2"/><ellipse cx="1244" cy="532" rx="0.7" ry="0.6"/><ellipse cx="838" cy="135" rx="1.0" ry="1.1"/><ellipse cx="720" cy="229" rx="0.7" ry="0.6"/><ellipse cx="1245" cy="316" rx="1.0" ry="0.9"/><ellipse cx="896" cy="214" rx="1.2" ry="1.3"/></g><g fill="#a98552" opacity=".2"><ellipse cx="936" cy="325" rx="0.8" ry="0.7"/><ellipse cx="1047" cy="738" rx="0.6" ry="0.6"/><ellipse cx="985" cy="532" rx="1.1" ry="1.5"/><ellipse cx="900" cy="327" rx="1.9" ry="1.7"/><ellipse cx="958" cy="339" rx="1.6" ry="1.6"/><ellipse cx="871" cy="857" rx="1.2" ry="1.5"/><ellipse cx="1100" cy="832" rx="1.5" ry="2.2"/><ellipse cx="931" cy="544" rx="1.7" ry="2.0"/><ellipse cx="978" cy="553" rx="0.9" ry="0.9"/><ellipse cx="1049" cy="843" rx="0.5" ry="0.5"/><ellipse cx="1049" cy="708" rx="1.2" ry="1.1"/><ellipse cx="1146" cy="381" rx="0.9" ry="1.1"/><ellipse cx="955" cy="868" rx="0.7" ry="0.8"/><ellipse cx="936" cy="346" rx="0.7" ry="1.0"/><ellipse cx="1147" cy="278" rx="0.9" ry="0.8"/></g><g fill="#a86a30" opacity=".65"><ellipse cx="879" cy="250" rx="2.1" ry="2.1"/><ellipse cx="837" cy="343" rx="0.7" ry="0.9"/><ellipse cx="742" cy="843" rx="2.4" ry="2.6"/><ellipse cx="718" cy="145" rx="0.9" ry="0.9"/><ellipse cx="1222" cy="760" rx="0.7" ry="1.0"/><ellipse cx="1295" cy="455" rx="0.6" ry="0.6"/><ellipse cx="729" cy="347" rx="0.8" ry="1.1"/><ellipse cx="790" cy="744" rx="1.2" ry="1.3"/><ellipse cx="1168" cy="553" rx="2.3" ry="2.4"/><ellipse cx="778" cy="552" rx="0.6" ry="1.1"/><ellipse cx="1242" cy="266" rx="1.3" ry="1.3"/><ellipse cx="1145" cy="956" rx="0.4" ry="0.6"/><ellipse cx="749" cy="418" rx="1.4" ry="1.6"/><ellipse cx="804" cy="986" rx="0.9" ry="0.9"/><ellipse cx="1051" cy="163" rx="2.8" ry="2.6"/><ellipse cx="722" cy="882" rx="2.2" ry="2.5"/><ellipse cx="1106" cy="987" rx="0.7" ry="0.5"/><ellipse cx="1235" cy="918" rx="0.8" ry="0.7"/><ellipse cx="1251" cy="952" rx="1.0" ry="1.3"/><ellipse cx="1259" cy="617" rx="1.0" ry="1.6"/><ellipse cx="716" cy="159" rx="0.9" ry="1.0"/><ellipse cx="865" cy="912" rx="1.5" ry="1.1"/><ellipse cx="1262" cy="371" rx="2.4" ry="3.6"/><ellipse cx="835" cy="881" rx="0.4" ry="0.5"/><ellipse cx="1298" cy="639" rx="0.7" ry="0.9"/><ellipse cx="834" cy="882" rx="0.6" ry="0.8"/><ellipse cx="1204" cy="613" rx="0.8" ry="1.1"/><ellipse cx="1145" cy="988" rx="0.6" ry="0.5"/><ellipse cx="728" cy="868" rx="1.5" ry="1.6"/><ellipse cx="1271" cy="239" rx="0.8" ry="1.0"/><ellipse cx="1208" cy="805" rx="0.5" ry="0.6"/><ellipse cx="1290" cy="395" rx="0.9" ry="1.3"/><ellipse cx="1181" cy="856" rx="2.2" ry="2.3"/><ellipse cx="728" cy="236" rx="0.9" ry="0.9"/><ellipse cx="909" cy="143" rx="0.8" ry="1.3"/><ellipse cx="782" cy="943" rx="0.8" ry="0.7"/><ellipse cx="923" cy="964" rx="1.2" ry="1.8"/><ellipse cx="1203" cy="387" rx="2.0" ry="2.3"/><ellipse cx="837" cy="710" rx="0.5" ry="0.6"/><ellipse cx="1119" cy="1001" rx="1.2" ry="1.5"/><ellipse cx="1174" cy="406" rx="0.8" ry="0.9"/><ellipse cx="849" cy="168" rx="1.9" ry="1.8"/><ellipse cx="718" cy="924" rx="1.1" ry="1.7"/><ellipse cx="1287" cy="618" rx="1.0" ry="1.5"/><ellipse cx="1176" cy="231" rx="1.0" ry="1.1"/><ellipse cx="1260" cy="828" rx="0.9" ry="1.1"/><ellipse cx="1270" cy="668" rx="2.0" ry="1.5"/><ellipse cx="852" cy="197" rx="1.2" ry="1.1"/><ellipse cx="1296" cy="385" rx="1.3" ry="1.4"/></g><g fill="#a86a30" opacity=".8"><ellipse cx="746" cy="914" rx="2.1" ry="2.2"/><ellipse cx="773" cy="442" rx="0.7" ry="0.8"/><ellipse cx="791" cy="923" rx="1.4" ry="1.6"/><ellipse cx="753" cy="881" rx="1.2" ry="1.0"/><ellipse cx="716" cy="990" rx="1.4" ry="1.6"/><ellipse cx="1265" cy="353" rx="2.3" ry="2.8"/><ellipse cx="1244" cy="677" rx="2.1" ry="2.4"/><ellipse cx="1282" cy="199" rx="1.0" ry="0.9"/><ellipse cx="826" cy="393" rx="3.1" ry="3.5"/><ellipse cx="1242" cy="634" rx="1.0" ry="1.2"/><ellipse cx="1267" cy="495" rx="2.7" ry="3.2"/><ellipse cx="1181" cy="153" rx="2.5" ry="2.9"/><ellipse cx="1245" cy="538" rx="1.5" ry="2.0"/><ellipse cx="1260" cy="688" rx="0.7" ry="0.7"/><ellipse cx="1097" cy="947" rx="0.9" ry="1.0"/><ellipse cx="1225" cy="640" rx="0.6" ry="0.5"/><ellipse cx="801" cy="792" rx="0.9" ry="0.7"/><ellipse cx="1058" cy="239" rx="0.6" ry="0.7"/><ellipse cx="727" cy="145" rx="0.9" ry="1.2"/><ellipse cx="1237" cy="436" rx="1.2" ry="1.3"/><ellipse cx="1285" cy="507" rx="0.7" ry="0.7"/><ellipse cx="808" cy="638" rx="2.5" ry="1.8"/><ellipse cx="1258" cy="467" rx="0.7" ry="0.7"/><ellipse cx="1042" cy="981" rx="2.2" ry="2.0"/><ellipse cx="1184" cy="843" rx="1.5" ry="1.1"/><ellipse cx="822" cy="743" rx="0.6" ry="0.7"/><ellipse cx="1153" cy="252" rx="0.7" ry="1.1"/><ellipse cx="1237" cy="608" rx="0.9" ry="1.4"/><ellipse cx="1149" cy="899" rx="2.9" ry="2.7"/><ellipse cx="1275" cy="811" rx="1.0" ry="0.7"/><ellipse cx="874" cy="171" rx="0.9" ry="0.8"/><ellipse cx="1105" cy="123" rx="0.4" ry="0.7"/><ellipse cx="1291" cy="175" rx="0.6" ry="0.7"/><ellipse cx="1193" cy="232" rx="1.4" ry="1.1"/><ellipse cx="992" cy="150" rx="0.7" ry="0.6"/><ellipse cx="1225" cy="725" rx="1.2" ry="1.5"/><ellipse cx="841" cy="243" rx="2.5" ry="2.9"/><ellipse cx="1295" cy="966" rx="2.8" ry="3.0"/><ellipse cx="779" cy="717" rx="0.7" ry="0.8"/><ellipse cx="1244" cy="129" rx="1.6" ry="1.7"/><ellipse cx="1239" cy="667" rx="2.1" ry="1.7"/><ellipse cx="1026" cy="987" rx="0.8" ry="1.3"/><ellipse cx="1283" cy="780" rx="0.6" ry="0.6"/><ellipse cx="1255" cy="484" rx="0.8" ry="0.8"/><ellipse cx="1224" cy="257" rx="0.8" ry="0.6"/><ellipse cx="1017" cy="954" rx="0.5" ry="0.5"/><ellipse cx="741" cy="595" rx="1.2" ry="1.0"/><ellipse cx="1198" cy="966" rx="0.8" ry="1.0"/><ellipse cx="838" cy="942" rx="1.7" ry="1.9"/><ellipse cx="745" cy="568" rx="2.9" ry="2.7"/><ellipse cx="941" cy="956" rx="1.4" ry="1.6"/><ellipse cx="1016" cy="198" rx="1.4" ry="1.7"/><ellipse cx="767" cy="174" rx="0.9" ry="1.0"/><ellipse cx="1085" cy="157" rx="2.1" ry="3.6"/><ellipse cx="1282" cy="809" rx="1.2" ry="1.0"/></g><g fill="#a3622c" opacity=".35"><ellipse cx="1289" cy="509" rx="1.4" ry="1.6"/><ellipse cx="1261" cy="259" rx="0.5" ry="0.7"/><ellipse cx="1013" cy="178" rx="0.7" ry="0.7"/><ellipse cx="1220" cy="517" rx="2.3" ry="2.6"/><ellipse cx="1282" cy="382" rx="0.7" ry="1.1"/><ellipse cx="795" cy="688" rx="0.7" ry="0.8"/><ellipse cx="1190" cy="948" rx="0.7" ry="1.0"/><ellipse cx="1246" cy="369" rx="1.2" ry="1.5"/><ellipse cx="1298" cy="717" rx="1.1" ry="1.2"/><ellipse cx="1237" cy="673" rx="0.4" ry="0.5"/><ellipse cx="1247" cy="168" rx="0.5" ry="0.5"/><ellipse cx="1264" cy="950" rx="1.3" ry="1.6"/><ellipse cx="821" cy="212" rx="0.6" ry="0.6"/><ellipse cx="946" cy="1000" rx="0.6" ry="0.6"/><ellipse cx="817" cy="871" rx="2.2" ry="2.2"/><ellipse cx="1251" cy="859" rx="0.5" ry="0.6"/><ellipse cx="1181" cy="240" rx="1.4" ry="1.7"/><ellipse cx="1196" cy="706" rx="1.7" ry="2.0"/><ellipse cx="833" cy="300" rx="1.8" ry="2.8"/><ellipse cx="1161" cy="918" rx="1.0" ry="0.8"/><ellipse cx="1244" cy="560" rx="0.5" ry="0.5"/><ellipse cx="825" cy="476" rx="0.8" ry="0.8"/><ellipse cx="808" cy="911" rx="0.6" ry="0.8"/><ellipse cx="1273" cy="458" rx="0.6" ry="0.7"/><ellipse cx="1249" cy="767" rx="0.6" ry="0.5"/><ellipse cx="1240" cy="813" rx="0.6" ry="0.7"/><ellipse cx="908" cy="938" rx="0.9" ry="1.0"/><ellipse cx="733" cy="923" rx="1.3" ry="1.8"/><ellipse cx="926" cy="906" rx="1.3" ry="1.8"/><ellipse cx="1254" cy="168" rx="1.4" ry="1.4"/><ellipse cx="1273" cy="716" rx="2.8" ry="3.2"/><ellipse cx="863" cy="246" rx="0.6" ry="0.8"/><ellipse cx="815" cy="742" rx="1.0" ry="1.3"/><ellipse cx="766" cy="145" rx="2.2" ry="2.5"/><ellipse cx="1296" cy="300" rx="0.6" ry="0.7"/><ellipse cx="1225" cy="822" rx="1.7" ry="2.0"/><ellipse cx="1170" cy="510" rx="1.6" ry="1.3"/><ellipse cx="746" cy="778" rx="1.7" ry="2.4"/><ellipse cx="1111" cy="207" rx="1.4" ry="1.5"/><ellipse cx="842" cy="642" rx="0.4" ry="0.5"/><ellipse cx="1016" cy="222" rx="2.4" ry="2.1"/><ellipse cx="1080" cy="204" rx="1.0" ry="1.3"/><ellipse cx="977" cy="959" rx="1.8" ry="2.6"/><ellipse cx="1043" cy="240" rx="1.3" ry="1.1"/><ellipse cx="715" cy="903" rx="0.7" ry="0.9"/><ellipse cx="1208" cy="123" rx="0.8" ry="1.2"/><ellipse cx="1205" cy="636" rx="0.5" ry="0.6"/><ellipse cx="1113" cy="983" rx="1.9" ry="1.8"/><ellipse cx="745" cy="542" rx="1.1" ry="1.3"/><ellipse cx="1097" cy="891" rx="1.6" ry="1.6"/><ellipse cx="959" cy="236" rx="0.9" ry="0.9"/><ellipse cx="736" cy="537" rx="1.1" ry="0.9"/><ellipse cx="914" cy="921" rx="0.7" ry="0.8"/><ellipse cx="1111" cy="234" rx="1.6" ry="1.3"/><ellipse cx="1251" cy="386" rx="1.2" ry="1.2"/><ellipse cx="948" cy="164" rx="2.3" ry="2.8"/><ellipse cx="718" cy="144" rx="1.7" ry="2.8"/><ellipse cx="934" cy="985" rx="0.5" ry="0.5"/><ellipse cx="1171" cy="656" rx="2.1" ry="2.7"/></g><g fill="#a98552" opacity=".3"><ellipse cx="917" cy="442" rx="1.0" ry="1.1"/><ellipse cx="1090" cy="374" rx="1.3" ry="1.4"/><ellipse cx="969" cy="794" rx="0.7" ry="0.9"/><ellipse cx="856" cy="253" rx="2.0" ry="1.4"/><ellipse cx="1166" cy="631" rx="1.4" ry="1.6"/><ellipse cx="943" cy="793" rx="1.6" ry="1.4"/><ellipse cx="1061" cy="825" rx="0.6" ry="0.6"/><ellipse cx="1107" cy="826" rx="1.4" ry="1.2"/><ellipse cx="1023" cy="804" rx="0.5" ry="0.8"/><ellipse cx="1034" cy="398" rx="0.9" ry="0.9"/><ellipse cx="1110" cy="749" rx="0.6" ry="0.6"/><ellipse cx="868" cy="428" rx="0.9" ry="1.1"/><ellipse cx="1025" cy="737" rx="0.9" ry="0.9"/><ellipse cx="861" cy="306" rx="2.0" ry="2.1"/><ellipse cx="1153" cy="628" rx="1.5" ry="1.8"/><ellipse cx="1148" cy="519" rx="1.3" ry="1.5"/><ellipse cx="1000" cy="513" rx="1.0" ry="1.0"/><ellipse cx="1168" cy="544" rx="1.1" ry="0.9"/><ellipse cx="1108" cy="477" rx="0.8" ry="0.7"/><ellipse cx="861" cy="340" rx="0.8" ry="0.9"/></g><g fill="#9a5a28" opacity=".65"><ellipse cx="731" cy="146" rx="0.8" ry="1.1"/><ellipse cx="789" cy="585" rx="0.5" ry="0.6"/><ellipse cx="1146" cy="981" rx="2.1" ry="2.6"/><ellipse cx="918" cy="154" rx="0.4" ry="0.6"/><ellipse cx="1243" cy="523" rx="1.3" ry="1.2"/><ellipse cx="771" cy="491" rx="3.1" ry="2.9"/><ellipse cx="725" cy="877" rx="2.4" ry="2.2"/><ellipse cx="1283" cy="698" rx="1.1" ry="0.9"/><ellipse cx="1171" cy="376" rx="2.1" ry="2.2"/><ellipse cx="963" cy="955" rx="2.0" ry="1.8"/><ellipse cx="1170" cy="329" rx="0.5" ry="0.5"/><ellipse cx="1273" cy="577" rx="1.7" ry="1.6"/><ellipse cx="888" cy="143" rx="0.4" ry="0.6"/><ellipse cx="1285" cy="871" rx="0.7" ry="0.5"/><ellipse cx="911" cy="208" rx="2.5" ry="3.4"/><ellipse cx="816" cy="676" rx="0.4" ry="0.6"/><ellipse cx="1267" cy="536" rx="2.5" ry="2.3"/><ellipse cx="1053" cy="984" rx="1.2" ry="1.0"/><ellipse cx="1273" cy="690" rx="2.0" ry="2.0"/><ellipse cx="833" cy="913" rx="0.5" ry="0.7"/><ellipse cx="1250" cy="537" rx="0.8" ry="1.1"/><ellipse cx="1255" cy="542" rx="0.8" ry="0.9"/><ellipse cx="1208" cy="372" rx="0.7" ry="0.6"/><ellipse cx="1032" cy="144" rx="0.7" ry="0.7"/><ellipse cx="1179" cy="535" rx="0.7" ry="0.9"/><ellipse cx="1203" cy="144" rx="0.7" ry="0.9"/><ellipse cx="718" cy="472" rx="3.1" ry="3.6"/><ellipse cx="806" cy="874" rx="0.6" ry="0.8"/><ellipse cx="1095" cy="158" rx="1.7" ry="2.0"/><ellipse cx="1259" cy="789" rx="0.9" ry="0.9"/><ellipse cx="1237" cy="619" rx="0.6" ry="0.9"/><ellipse cx="1055" cy="245" rx="0.6" ry="0.5"/><ellipse cx="1245" cy="670" rx="1.1" ry="1.1"/><ellipse cx="924" cy="913" rx="0.5" ry="0.5"/><ellipse cx="961" cy="906" rx="0.9" ry="1.0"/><ellipse cx="841" cy="580" rx="0.6" ry="0.9"/><ellipse cx="1020" cy="950" rx="1.5" ry="1.4"/><ellipse cx="1201" cy="932" rx="0.9" ry="1.1"/><ellipse cx="812" cy="321" rx="1.3" ry="1.9"/><ellipse cx="1064" cy="1001" rx="1.1" ry="1.4"/><ellipse cx="957" cy="986" rx="1.7" ry="1.9"/><ellipse cx="728" cy="488" rx="0.5" ry="0.7"/><ellipse cx="747" cy="993" rx="0.7" ry="0.7"/></g><g fill="#8f5526" opacity=".65"><ellipse cx="996" cy="989" rx="0.6" ry="0.4"/><ellipse cx="841" cy="283" rx="0.6" ry="0.6"/><ellipse cx="1254" cy="321" rx="1.1" ry="1.0"/><ellipse cx="717" cy="915" rx="0.6" ry="0.6"/><ellipse cx="1177" cy="691" rx="0.8" ry="1.0"/><ellipse cx="1168" cy="420" rx="1.2" ry="1.3"/><ellipse cx="1018" cy="993" rx="0.8" ry="0.6"/><ellipse cx="732" cy="691" rx="1.3" ry="1.6"/><ellipse cx="777" cy="767" rx="1.7" ry="2.4"/><ellipse cx="771" cy="270" rx="0.7" ry="0.7"/><ellipse cx="926" cy="131" rx="2.2" ry="2.6"/><ellipse cx="1288" cy="891" rx="1.0" ry="1.1"/><ellipse cx="1176" cy="887" rx="0.6" ry="0.7"/><ellipse cx="1221" cy="935" rx="0.8" ry="0.9"/><ellipse cx="1200" cy="828" rx="1.1" ry="1.2"/><ellipse cx="1256" cy="476" rx="1.0" ry="1.4"/><ellipse cx="1146" cy="247" rx="0.5" ry="0.8"/><ellipse cx="819" cy="248" rx="0.5" ry="0.6"/><ellipse cx="1243" cy="291" rx="0.7" ry="1.1"/><ellipse cx="1262" cy="490" rx="1.5" ry="1.3"/><ellipse cx="1201" cy="604" rx="2.7" ry="3.2"/><ellipse cx="1284" cy="664" rx="1.2" ry="1.6"/><ellipse cx="929" cy="967" rx="0.9" ry="0.7"/><ellipse cx="786" cy="136" rx="2.1" ry="1.9"/><ellipse cx="1043" cy="981" rx="2.2" ry="2.8"/><ellipse cx="1200" cy="378" rx="0.9" ry="0.9"/><ellipse cx="1201" cy="896" rx="1.1" ry="1.3"/><ellipse cx="955" cy="994" rx="1.7" ry="1.9"/><ellipse cx="754" cy="578" rx="1.3" ry="1.4"/><ellipse cx="1263" cy="233" rx="1.2" ry="1.0"/><ellipse cx="843" cy="746" rx="1.1" ry="1.4"/><ellipse cx="1287" cy="223" rx="0.7" ry="0.5"/><ellipse cx="847" cy="163" rx="0.5" ry="0.7"/><ellipse cx="815" cy="988" rx="0.6" ry="0.7"/><ellipse cx="1201" cy="866" rx="0.5" ry="0.4"/><ellipse cx="1043" cy="201" rx="0.7" ry="0.8"/><ellipse cx="1105" cy="966" rx="1.6" ry="1.7"/><ellipse cx="716" cy="153" rx="0.6" ry="0.8"/><ellipse cx="1242" cy="447" rx="1.4" ry="1.3"/><ellipse cx="746" cy="360" rx="0.7" ry="0.7"/><ellipse cx="717" cy="734" rx="0.7" ry="0.8"/><ellipse cx="824" cy="680" rx="2.7" ry="2.6"/><ellipse cx="1144" cy="976" rx="1.0" ry="1.1"/><ellipse cx="801" cy="632" rx="1.0" ry="1.1"/><ellipse cx="1256" cy="752" rx="0.6" ry="0.4"/><ellipse cx="1254" cy="740" rx="0.8" ry="1.0"/><ellipse cx="1232" cy="282" rx="0.9" ry="0.9"/><ellipse cx="785" cy="605" rx="3.1" ry="2.7"/><ellipse cx="1074" cy="989" rx="1.0" ry="1.5"/><ellipse cx="1207" cy="979" rx="1.4" ry="1.9"/><ellipse cx="1219" cy="534" rx="1.2" ry="1.2"/></g><g fill="#9a5a28" opacity=".35"><ellipse cx="790" cy="255" rx="1.4" ry="1.1"/><ellipse cx="1184" cy="849" rx="2.1" ry="2.4"/><ellipse cx="1001" cy="964" rx="0.8" ry="0.8"/><ellipse cx="740" cy="590" rx="1.0" ry="0.7"/><ellipse cx="1247" cy="192" rx="0.6" ry="0.8"/><ellipse cx="814" cy="987" rx="1.1" ry="1.2"/><ellipse cx="1199" cy="679" rx="0.5" ry="0.5"/><ellipse cx="1237" cy="172" rx="0.8" ry="0.9"/><ellipse cx="1207" cy="581" rx="0.8" ry="0.9"/><ellipse cx="1231" cy="928" rx="0.9" ry="0.8"/><ellipse cx="892" cy="249" rx="2.0" ry="1.8"/><ellipse cx="919" cy="956" rx="1.4" ry="1.6"/><ellipse cx="1052" cy="248" rx="0.7" ry="0.7"/><ellipse cx="1182" cy="876" rx="0.7" ry="1.0"/><ellipse cx="759" cy="762" rx="0.9" ry="1.3"/><ellipse cx="1174" cy="860" rx="2.5" ry="2.8"/><ellipse cx="1233" cy="126" rx="2.4" ry="3.5"/><ellipse cx="836" cy="286" rx="1.3" ry="1.5"/><ellipse cx="1183" cy="712" rx="0.6" ry="0.5"/><ellipse cx="816" cy="325" rx="0.6" ry="0.7"/><ellipse cx="1105" cy="142" rx="0.6" ry="0.9"/><ellipse cx="829" cy="796" rx="0.9" ry="1.1"/><ellipse cx="755" cy="126" rx="2.3" ry="2.5"/><ellipse cx="1290" cy="998" rx="0.6" ry="0.9"/><ellipse cx="747" cy="231" rx="2.6" ry="2.4"/><ellipse cx="789" cy="141" rx="1.8" ry="1.7"/><ellipse cx="749" cy="716" rx="0.5" ry="0.5"/><ellipse cx="1251" cy="428" rx="2.7" ry="2.9"/><ellipse cx="837" cy="165" rx="1.4" ry="1.8"/><ellipse cx="722" cy="404" rx="0.6" ry="0.5"/><ellipse cx="785" cy="903" rx="0.7" ry="1.1"/><ellipse cx="963" cy="139" rx="2.2" ry="3.6"/><ellipse cx="1278" cy="319" rx="0.9" ry="1.2"/><ellipse cx="1186" cy="708" rx="1.9" ry="1.5"/><ellipse cx="1281" cy="743" rx="1.3" ry="1.7"/><ellipse cx="855" cy="215" rx="0.5" ry="0.5"/><ellipse cx="724" cy="680" rx="1.0" ry="1.6"/><ellipse cx="1173" cy="444" rx="1.2" ry="1.4"/><ellipse cx="1098" cy="237" rx="1.3" ry="1.3"/><ellipse cx="1203" cy="772" rx="0.6" ry="0.6"/><ellipse cx="1006" cy="999" rx="1.6" ry="1.9"/><ellipse cx="962" cy="250" rx="0.7" ry="0.9"/><ellipse cx="947" cy="140" rx="0.9" ry="1.0"/><ellipse cx="1282" cy="906" rx="0.6" ry="0.6"/><ellipse cx="737" cy="607" rx="1.0" ry="1.0"/><ellipse cx="1251" cy="961" rx="1.0" ry="1.0"/><ellipse cx="763" cy="694" rx="1.4" ry="1.6"/><ellipse cx="1097" cy="142" rx="0.7" ry="0.7"/><ellipse cx="1235" cy="758" rx="1.0" ry="0.7"/><ellipse cx="804" cy="762" rx="2.5" ry="2.9"/><ellipse cx="1269" cy="205" rx="1.0" ry="1.0"/><ellipse cx="1221" cy="636" rx="1.6" ry="2.3"/></g><g fill="#b0703a" opacity=".35"><ellipse cx="1205" cy="242" rx="1.3" ry="1.3"/><ellipse cx="738" cy="617" rx="0.5" ry="0.6"/><ellipse cx="719" cy="460" rx="1.3" ry="1.6"/><ellipse cx="823" cy="854" rx="0.7" ry="1.0"/><ellipse cx="1050" cy="945" rx="2.5" ry="2.5"/><ellipse cx="1204" cy="479" rx="2.5" ry="2.5"/><ellipse cx="1266" cy="557" rx="0.6" ry="0.7"/><ellipse cx="723" cy="406" rx="1.1" ry="1.1"/><ellipse cx="915" cy="245" rx="1.0" ry="1.0"/><ellipse cx="1187" cy="358" rx="2.2" ry="2.2"/><ellipse cx="1191" cy="123" rx="0.8" ry="0.7"/><ellipse cx="1268" cy="372" rx="0.8" ry="1.3"/><ellipse cx="1185" cy="677" rx="0.7" ry="1.1"/><ellipse cx="816" cy="243" rx="1.0" ry="1.1"/><ellipse cx="1162" cy="234" rx="0.7" ry="0.7"/><ellipse cx="1178" cy="394" rx="3.0" ry="2.7"/><ellipse cx="1272" cy="321" rx="1.5" ry="1.6"/><ellipse cx="1266" cy="605" rx="0.6" ry="0.9"/><ellipse cx="1262" cy="431" rx="0.8" ry="0.7"/><ellipse cx="1257" cy="539" rx="0.7" ry="1.1"/><ellipse cx="772" cy="936" rx="1.5" ry="1.6"/><ellipse cx="765" cy="302" rx="2.0" ry="2.1"/><ellipse cx="726" cy="523" rx="1.2" ry="1.6"/><ellipse cx="767" cy="516" rx="0.6" ry="0.5"/><ellipse cx="1138" cy="974" rx="1.3" ry="1.6"/><ellipse cx="835" cy="169" rx="1.2" ry="1.0"/><ellipse cx="824" cy="748" rx="0.8" ry="0.9"/><ellipse cx="1254" cy="508" rx="0.8" ry="0.9"/><ellipse cx="860" cy="946" rx="1.4" ry="1.4"/><ellipse cx="1179" cy="897" rx="0.7" ry="0.7"/><ellipse cx="1193" cy="138" rx="0.8" ry="0.9"/><ellipse cx="1131" cy="988" rx="0.8" ry="1.0"/><ellipse cx="729" cy="535" rx="0.8" ry="0.7"/><ellipse cx="738" cy="643" rx="0.9" ry="0.7"/><ellipse cx="812" cy="860" rx="1.2" ry="0.9"/><ellipse cx="757" cy="735" rx="0.9" ry="0.8"/><ellipse cx="1193" cy="348" rx="0.8" ry="1.0"/><ellipse cx="1250" cy="405" rx="0.7" ry="0.9"/><ellipse cx="1168" cy="258" rx="1.3" ry="1.5"/><ellipse cx="771" cy="476" rx="0.7" ry="0.8"/><ellipse cx="960" cy="978" rx="0.6" ry="0.5"/><ellipse cx="917" cy="1002" rx="0.9" ry="1.0"/><ellipse cx="823" cy="569" rx="0.5" ry="0.6"/><ellipse cx="742" cy="869" rx="0.4" ry="0.7"/><ellipse cx="1093" cy="952" rx="1.2" ry="1.0"/><ellipse cx="728" cy="257" rx="0.6" ry="0.6"/><ellipse cx="762" cy="688" rx="1.2" ry="1.1"/><ellipse cx="1198" cy="934" rx="0.6" ry="0.9"/><ellipse cx="1287" cy="603" rx="2.1" ry="2.2"/></g><g fill="#b0703a" opacity=".2"><ellipse cx="987" cy="779" rx="1.2" ry="1.4"/><ellipse cx="963" cy="285" rx="1.5" ry="1.8"/><ellipse cx="1097" cy="678" rx="0.8" ry="0.8"/><ellipse cx="984" cy="623" rx="0.7" ry="0.8"/><ellipse cx="1033" cy="833" rx="1.9" ry="2.0"/><ellipse cx="990" cy="255" rx="0.7" ry="1.1"/><ellipse cx="926" cy="408" rx="1.0" ry="1.4"/></g><g fill="#a3622c" opacity=".8"><ellipse cx="1136" cy="139" rx="1.1" ry="1.4"/><ellipse cx="778" cy="257" rx="1.8" ry="2.7"/><ellipse cx="775" cy="185" rx="0.8" ry="1.0"/><ellipse cx="732" cy="558" rx="1.1" ry="0.9"/><ellipse cx="948" cy="181" rx="1.0" ry="1.2"/><ellipse cx="830" cy="962" rx="1.8" ry="2.0"/><ellipse cx="734" cy="139" rx="1.8" ry="1.5"/><ellipse cx="919" cy="204" rx="0.8" ry="0.9"/><ellipse cx="832" cy="659" rx="1.3" ry="1.7"/><ellipse cx="987" cy="976" rx="2.5" ry="2.5"/><ellipse cx="722" cy="936" rx="1.1" ry="1.2"/><ellipse cx="1249" cy="347" rx="1.4" ry="1.2"/><ellipse cx="1039" cy="167" rx="1.7" ry="1.8"/><ellipse cx="835" cy="210" rx="0.5" ry="0.8"/><ellipse cx="1165" cy="144" rx="1.0" ry="1.4"/><ellipse cx="775" cy="773" rx="1.1" ry="1.0"/><ellipse cx="1248" cy="792" rx="2.3" ry="3.1"/><ellipse cx="1027" cy="186" rx="1.5" ry="1.6"/><ellipse cx="999" cy="218" rx="1.0" ry="1.3"/><ellipse cx="1123" cy="135" rx="2.3" ry="2.3"/><ellipse cx="1111" cy="133" rx="0.8" ry="1.1"/><ellipse cx="736" cy="985" rx="0.8" ry="0.6"/><ellipse cx="1248" cy="650" rx="1.4" ry="1.2"/><ellipse cx="807" cy="877" rx="1.0" ry="1.0"/><ellipse cx="889" cy="975" rx="1.4" ry="2.0"/><ellipse cx="785" cy="625" rx="1.5" ry="1.6"/><ellipse cx="715" cy="204" rx="1.0" ry="1.1"/><ellipse cx="815" cy="977" rx="0.5" ry="0.8"/><ellipse cx="1215" cy="553" rx="1.1" ry="0.9"/><ellipse cx="752" cy="599" rx="1.3" ry="1.3"/><ellipse cx="1031" cy="939" rx="1.7" ry="2.0"/><ellipse cx="724" cy="411" rx="0.5" ry="0.5"/><ellipse cx="1282" cy="201" rx="2.7" ry="2.5"/><ellipse cx="1289" cy="751" rx="0.8" ry="0.6"/><ellipse cx="1093" cy="161" rx="0.6" ry="0.6"/><ellipse cx="1267" cy="354" rx="1.2" ry="1.0"/><ellipse cx="992" cy="943" rx="0.7" ry="0.8"/><ellipse cx="1253" cy="242" rx="2.0" ry="2.1"/><ellipse cx="881" cy="976" rx="0.8" ry="0.7"/><ellipse cx="749" cy="677" rx="3.1" ry="2.9"/><ellipse cx="1089" cy="140" rx="2.0" ry="1.9"/><ellipse cx="792" cy="502" rx="2.9" ry="3.5"/><ellipse cx="825" cy="688" rx="1.9" ry="2.0"/><ellipse cx="1224" cy="404" rx="2.0" ry="2.3"/><ellipse cx="807" cy="133" rx="2.7" ry="2.4"/><ellipse cx="1293" cy="802" rx="2.5" ry="2.2"/><ellipse cx="819" cy="511" rx="0.5" ry="0.5"/><ellipse cx="778" cy="607" rx="0.8" ry="0.9"/><ellipse cx="976" cy="126" rx="1.0" ry="0.7"/><ellipse cx="736" cy="318" rx="0.8" ry="0.9"/><ellipse cx="937" cy="960" rx="2.2" ry="2.0"/></g><g fill="#9a5a28" opacity=".8"><ellipse cx="1009" cy="126" rx="0.6" ry="0.6"/><ellipse cx="720" cy="387" rx="1.0" ry="1.2"/><ellipse cx="886" cy="960" rx="0.7" ry="0.9"/><ellipse cx="927" cy="911" rx="0.8" ry="0.9"/><ellipse cx="956" cy="138" rx="1.1" ry="1.0"/><ellipse cx="1206" cy="300" rx="0.9" ry="1.0"/><ellipse cx="746" cy="428" rx="2.8" ry="3.6"/><ellipse cx="955" cy="999" rx="2.0" ry="2.8"/><ellipse cx="795" cy="556" rx="1.1" ry="1.1"/><ellipse cx="759" cy="666" rx="3.2" ry="3.5"/><ellipse cx="1241" cy="222" rx="0.6" ry="0.5"/><ellipse cx="745" cy="577" rx="1.1" ry="0.9"/><ellipse cx="1280" cy="657" rx="1.2" ry="1.4"/><ellipse cx="1275" cy="493" rx="1.2" ry="1.4"/><ellipse cx="1186" cy="957" rx="1.0" ry="1.3"/><ellipse cx="717" cy="631" rx="0.6" ry="0.6"/><ellipse cx="772" cy="834" rx="0.8" ry="0.6"/><ellipse cx="1214" cy="807" rx="1.2" ry="1.1"/><ellipse cx="888" cy="997" rx="2.0" ry="2.3"/><ellipse cx="1236" cy="178" rx="1.0" ry="1.2"/><ellipse cx="735" cy="315" rx="0.8" ry="1.0"/><ellipse cx="942" cy="129" rx="0.6" ry="0.7"/><ellipse cx="766" cy="363" rx="0.9" ry="1.1"/><ellipse cx="1231" cy="750" rx="0.6" ry="0.6"/><ellipse cx="800" cy="164" rx="1.2" ry="1.5"/><ellipse cx="1239" cy="317" rx="2.0" ry="2.1"/><ellipse cx="718" cy="922" rx="0.8" ry="0.9"/><ellipse cx="887" cy="928" rx="0.8" ry="0.6"/><ellipse cx="1273" cy="133" rx="0.9" ry="1.0"/><ellipse cx="1245" cy="921" rx="1.9" ry="2.6"/><ellipse cx="738" cy="938" rx="1.7" ry="1.6"/><ellipse cx="1055" cy="221" rx="1.2" ry="1.1"/><ellipse cx="1289" cy="179" rx="1.3" ry="1.6"/><ellipse cx="1232" cy="223" rx="0.6" ry="0.6"/><ellipse cx="717" cy="238" rx="0.9" ry="0.9"/><ellipse cx="1250" cy="446" rx="0.7" ry="0.9"/><ellipse cx="989" cy="906" rx="0.7" ry="1.0"/><ellipse cx="1262" cy="934" rx="0.5" ry="0.6"/><ellipse cx="930" cy="938" rx="1.2" ry="1.3"/><ellipse cx="987" cy="231" rx="0.8" ry="1.1"/><ellipse cx="1188" cy="974" rx="0.9" ry="0.9"/><ellipse cx="719" cy="821" rx="0.7" ry="0.6"/><ellipse cx="1111" cy="909" rx="1.9" ry="2.2"/><ellipse cx="736" cy="215" rx="1.3" ry="1.5"/><ellipse cx="1229" cy="782" rx="1.1" ry="0.9"/><ellipse cx="974" cy="997" rx="1.3" ry="1.6"/><ellipse cx="824" cy="492" rx="1.1" ry="1.1"/><ellipse cx="1031" cy="160" rx="1.1" ry="1.2"/><ellipse cx="1248" cy="554" rx="0.6" ry="0.6"/><ellipse cx="741" cy="843" rx="0.6" ry="0.5"/><ellipse cx="976" cy="938" rx="2.5" ry="2.2"/><ellipse cx="944" cy="932" rx="0.9" ry="0.7"/><ellipse cx="1089" cy="177" rx="1.2" ry="1.1"/><ellipse cx="1085" cy="957" rx="0.7" ry="0.7"/><ellipse cx="776" cy="427" rx="0.6" ry="0.8"/><ellipse cx="746" cy="866" rx="0.9" ry="1.0"/></g><g fill="#b0703a" opacity=".4"><ellipse cx="1137" cy="688" rx="1.9" ry="1.5"/><ellipse cx="1112" cy="552" rx="0.5" ry="0.8"/><ellipse cx="948" cy="658" rx="0.5" ry="0.5"/><ellipse cx="891" cy="270" rx="0.8" ry="1.1"/><ellipse cx="1111" cy="419" rx="1.0" ry="1.1"/><ellipse cx="951" cy="492" rx="1.5" ry="2.0"/><ellipse cx="1131" cy="712" rx="0.7" ry="0.9"/><ellipse cx="1102" cy="663" rx="1.5" ry="1.9"/><ellipse cx="1040" cy="857" rx="1.3" ry="1.8"/><ellipse cx="1118" cy="669" rx="1.6" ry="2.0"/><ellipse cx="1125" cy="369" rx="0.6" ry="0.7"/><ellipse cx="1155" cy="524" rx="0.9" ry="0.9"/><ellipse cx="1070" cy="373" rx="1.6" ry="1.6"/></g><g fill="#8f5526" opacity=".5"><ellipse cx="1193" cy="974" rx="1.0" ry="1.1"/><ellipse cx="1272" cy="900" rx="2.4" ry="1.8"/><ellipse cx="784" cy="688" rx="1.4" ry="1.4"/><ellipse cx="832" cy="139" rx="1.0" ry="1.0"/><ellipse cx="1179" cy="772" rx="0.8" ry="1.0"/><ellipse cx="948" cy="961" rx="0.9" ry="1.4"/><ellipse cx="1288" cy="394" rx="1.2" ry="1.2"/><ellipse cx="726" cy="151" rx="1.6" ry="2.2"/><ellipse cx="797" cy="317" rx="2.6" ry="2.4"/><ellipse cx="1265" cy="374" rx="0.5" ry="0.5"/><ellipse cx="1087" cy="954" rx="1.2" ry="1.0"/><ellipse cx="1275" cy="558" rx="0.8" ry="0.9"/><ellipse cx="716" cy="862" rx="1.3" ry="1.7"/><ellipse cx="862" cy="205" rx="0.8" ry="0.8"/><ellipse cx="910" cy="881" rx="3.2" ry="3.4"/><ellipse cx="983" cy="151" rx="0.6" ry="0.8"/><ellipse cx="998" cy="194" rx="1.2" ry="1.1"/><ellipse cx="1217" cy="993" rx="1.0" ry="1.3"/><ellipse cx="965" cy="965" rx="1.2" ry="1.0"/><ellipse cx="935" cy="219" rx="2.5" ry="2.5"/><ellipse cx="1067" cy="172" rx="2.5" ry="3.2"/><ellipse cx="738" cy="980" rx="0.6" ry="0.6"/><ellipse cx="1241" cy="224" rx="0.8" ry="0.8"/><ellipse cx="1228" cy="983" rx="2.5" ry="2.3"/><ellipse cx="1209" cy="140" rx="3.0" ry="2.4"/><ellipse cx="793" cy="901" rx="2.2" ry="3.1"/><ellipse cx="1289" cy="799" rx="1.7" ry="2.1"/><ellipse cx="1117" cy="1001" rx="1.1" ry="1.2"/><ellipse cx="718" cy="300" rx="0.8" ry="1.1"/><ellipse cx="721" cy="659" rx="0.5" ry="0.8"/><ellipse cx="1280" cy="974" rx="0.6" ry="0.5"/><ellipse cx="844" cy="973" rx="1.1" ry="1.9"/><ellipse cx="791" cy="526" rx="0.8" ry="0.7"/><ellipse cx="1283" cy="831" rx="1.1" ry="1.3"/><ellipse cx="1160" cy="231" rx="1.7" ry="1.8"/><ellipse cx="807" cy="998" rx="0.7" ry="0.7"/><ellipse cx="747" cy="415" rx="2.4" ry="1.9"/><ellipse cx="1258" cy="732" rx="1.5" ry="2.2"/><ellipse cx="1200" cy="716" rx="3.0" ry="2.2"/><ellipse cx="796" cy="357" rx="0.5" ry="0.4"/><ellipse cx="860" cy="976" rx="0.8" ry="1.1"/><ellipse cx="728" cy="441" rx="1.4" ry="1.9"/><ellipse cx="795" cy="977" rx="1.3" ry="1.4"/><ellipse cx="1272" cy="171" rx="2.1" ry="1.6"/><ellipse cx="960" cy="126" rx="0.6" ry="0.8"/><ellipse cx="1014" cy="995" rx="1.5" ry="2.1"/><ellipse cx="1010" cy="208" rx="0.7" ry="0.7"/><ellipse cx="1280" cy="913" rx="0.7" ry="0.9"/><ellipse cx="1222" cy="702" rx="1.0" ry="1.6"/><ellipse cx="1015" cy="906" rx="0.9" ry="0.9"/><ellipse cx="902" cy="984" rx="0.7" ry="0.8"/></g><g fill="#8f5526" opacity=".8"><ellipse cx="877" cy="221" rx="1.0" ry="1.0"/><ellipse cx="1184" cy="974" rx="0.7" ry="0.6"/><ellipse cx="752" cy="849" rx="3.0" ry="3.5"/><ellipse cx="1193" cy="908" rx="1.6" ry="2.3"/><ellipse cx="1042" cy="214" rx="0.7" ry="0.8"/><ellipse cx="723" cy="819" rx="0.9" ry="1.2"/><ellipse cx="1258" cy="412" rx="1.6" ry="1.3"/><ellipse cx="799" cy="790" rx="1.5" ry="1.9"/><ellipse cx="774" cy="483" rx="0.7" ry="0.7"/><ellipse cx="1093" cy="939" rx="0.8" ry="1.0"/><ellipse cx="795" cy="682" rx="0.4" ry="0.6"/><ellipse cx="1296" cy="254" rx="2.1" ry="2.4"/><ellipse cx="969" cy="998" rx="0.6" ry="0.7"/><ellipse cx="1000" cy="136" rx="1.3" ry="1.3"/><ellipse cx="1169" cy="399" rx="1.6" ry="1.4"/><ellipse cx="1248" cy="877" rx="1.6" ry="1.9"/><ellipse cx="1219" cy="309" rx="0.9" ry="0.7"/><ellipse cx="1257" cy="615" rx="0.7" ry="0.6"/><ellipse cx="1184" cy="818" rx="0.5" ry="0.6"/><ellipse cx="1058" cy="231" rx="1.1" ry="1.2"/><ellipse cx="762" cy="818" rx="1.0" ry="0.7"/><ellipse cx="1072" cy="977" rx="1.9" ry="2.3"/><ellipse cx="770" cy="976" rx="1.1" ry="1.1"/><ellipse cx="1237" cy="225" rx="1.0" ry="1.6"/><ellipse cx="843" cy="452" rx="1.6" ry="1.5"/><ellipse cx="1209" cy="890" rx="0.6" ry="0.9"/><ellipse cx="951" cy="224" rx="0.7" ry="1.0"/><ellipse cx="1260" cy="492" rx="1.1" ry="1.4"/><ellipse cx="726" cy="568" rx="2.1" ry="1.5"/><ellipse cx="781" cy="237" rx="0.7" ry="0.8"/><ellipse cx="724" cy="431" rx="0.4" ry="0.5"/><ellipse cx="1168" cy="164" rx="2.0" ry="1.6"/><ellipse cx="1280" cy="958" rx="0.6" ry="0.5"/><ellipse cx="1037" cy="957" rx="1.2" ry="1.3"/><ellipse cx="1259" cy="677" rx="1.5" ry="1.4"/><ellipse cx="839" cy="440" rx="0.5" ry="0.5"/><ellipse cx="726" cy="188" rx="2.6" ry="2.2"/><ellipse cx="1227" cy="186" rx="2.1" ry="2.9"/><ellipse cx="770" cy="648" rx="2.0" ry="2.2"/><ellipse cx="762" cy="620" rx="0.9" ry="1.0"/><ellipse cx="1201" cy="697" rx="0.9" ry="1.1"/><ellipse cx="778" cy="502" rx="1.6" ry="1.3"/><ellipse cx="1242" cy="363" rx="0.9" ry="0.9"/><ellipse cx="1234" cy="743" rx="0.8" ry="0.7"/><ellipse cx="1271" cy="243" rx="1.6" ry="1.9"/><ellipse cx="952" cy="880" rx="2.4" ry="1.9"/></g><g fill="#a3622c" opacity=".65"><ellipse cx="796" cy="424" rx="1.1" ry="1.3"/><ellipse cx="751" cy="932" rx="2.5" ry="2.7"/><ellipse cx="872" cy="992" rx="1.1" ry="1.3"/><ellipse cx="723" cy="607" rx="1.1" ry="0.9"/><ellipse cx="779" cy="152" rx="2.1" ry="1.9"/><ellipse cx="926" cy="939" rx="0.6" ry="0.5"/><ellipse cx="1064" cy="965" rx="1.6" ry="2.0"/><ellipse cx="1040" cy="162" rx="1.5" ry="1.4"/><ellipse cx="812" cy="778" rx="2.2" ry="2.7"/><ellipse cx="815" cy="845" rx="2.0" ry="2.7"/><ellipse cx="931" cy="160" rx="1.2" ry="1.1"/><ellipse cx="1216" cy="611" rx="0.9" ry="1.3"/><ellipse cx="1244" cy="783" rx="0.9" ry="0.7"/><ellipse cx="793" cy="785" rx="1.0" ry="1.4"/><ellipse cx="1152" cy="152" rx="0.6" ry="0.8"/><ellipse cx="809" cy="772" rx="1.0" ry="1.0"/><ellipse cx="926" cy="929" rx="0.8" ry="0.7"/><ellipse cx="795" cy="442" rx="1.1" ry="1.2"/><ellipse cx="1264" cy="481" rx="0.5" ry="0.8"/><ellipse cx="724" cy="717" rx="1.2" ry="1.2"/><ellipse cx="747" cy="122" rx="1.1" ry="1.3"/><ellipse cx="1034" cy="900" rx="1.3" ry="1.4"/><ellipse cx="771" cy="556" rx="0.7" ry="0.8"/><ellipse cx="834" cy="568" rx="1.0" ry="1.1"/><ellipse cx="1291" cy="919" rx="0.9" ry="1.0"/><ellipse cx="820" cy="183" rx="1.1" ry="1.1"/><ellipse cx="775" cy="350" rx="1.2" ry="1.2"/><ellipse cx="1289" cy="687" rx="1.8" ry="1.8"/><ellipse cx="1283" cy="713" rx="2.0" ry="2.5"/><ellipse cx="1014" cy="961" rx="1.0" ry="1.1"/><ellipse cx="784" cy="154" rx="0.8" ry="0.9"/><ellipse cx="1208" cy="763" rx="3.1" ry="2.2"/><ellipse cx="793" cy="407" rx="1.1" ry="1.1"/><ellipse cx="1290" cy="313" rx="1.1" ry="1.1"/><ellipse cx="785" cy="563" rx="0.5" ry="0.7"/><ellipse cx="922" cy="937" rx="0.8" ry="0.7"/><ellipse cx="749" cy="745" rx="0.7" ry="0.7"/><ellipse cx="1203" cy="866" rx="2.3" ry="2.7"/><ellipse cx="1230" cy="402" rx="0.8" ry="0.8"/><ellipse cx="724" cy="741" rx="1.9" ry="1.5"/><ellipse cx="1260" cy="625" rx="1.6" ry="1.8"/><ellipse cx="1186" cy="656" rx="0.8" ry="0.9"/><ellipse cx="877" cy="912" rx="1.1" ry="1.2"/><ellipse cx="765" cy="473" rx="2.5" ry="2.3"/></g><g fill="#a86a30" opacity=".35"><ellipse cx="738" cy="236" rx="0.8" ry="1.1"/><ellipse cx="935" cy="959" rx="0.5" ry="0.8"/><ellipse cx="1163" cy="164" rx="1.1" ry="1.4"/><ellipse cx="901" cy="970" rx="0.9" ry="0.7"/><ellipse cx="760" cy="860" rx="0.6" ry="0.6"/><ellipse cx="889" cy="127" rx="1.4" ry="1.6"/><ellipse cx="1196" cy="947" rx="1.0" ry="1.4"/><ellipse cx="778" cy="287" rx="0.7" ry="0.9"/><ellipse cx="1250" cy="670" rx="0.5" ry="0.6"/><ellipse cx="1117" cy="125" rx="0.7" ry="0.6"/><ellipse cx="1048" cy="221" rx="2.0" ry="2.1"/><ellipse cx="793" cy="921" rx="1.0" ry="1.1"/><ellipse cx="906" cy="204" rx="0.7" ry="0.7"/><ellipse cx="723" cy="358" rx="0.8" ry="0.9"/><ellipse cx="1186" cy="759" rx="3.0" ry="3.1"/><ellipse cx="1027" cy="225" rx="0.7" ry="0.7"/><ellipse cx="1205" cy="1000" rx="1.6" ry="2.3"/><ellipse cx="763" cy="631" rx="2.0" ry="1.5"/><ellipse cx="795" cy="364" rx="1.0" ry="1.6"/><ellipse cx="841" cy="820" rx="1.5" ry="1.6"/><ellipse cx="1151" cy="956" rx="2.2" ry="2.5"/><ellipse cx="1276" cy="877" rx="0.9" ry="0.9"/><ellipse cx="1194" cy="326" rx="0.9" ry="1.0"/><ellipse cx="1110" cy="960" rx="0.9" ry="0.7"/><ellipse cx="1117" cy="126" rx="3.1" ry="2.7"/><ellipse cx="1257" cy="297" rx="2.2" ry="2.0"/><ellipse cx="936" cy="941" rx="0.6" ry="0.6"/><ellipse cx="1121" cy="932" rx="0.5" ry="0.6"/><ellipse cx="726" cy="554" rx="0.9" ry="0.9"/><ellipse cx="1283" cy="955" rx="0.6" ry="0.5"/><ellipse cx="1267" cy="124" rx="0.5" ry="0.6"/><ellipse cx="737" cy="532" rx="0.8" ry="0.9"/><ellipse cx="1169" cy="125" rx="0.8" ry="1.0"/><ellipse cx="1119" cy="973" rx="0.6" ry="0.9"/><ellipse cx="1045" cy="189" rx="0.8" ry="1.1"/><ellipse cx="732" cy="738" rx="1.7" ry="2.3"/><ellipse cx="733" cy="769" rx="1.7" ry="2.2"/><ellipse cx="1178" cy="652" rx="2.0" ry="1.5"/><ellipse cx="1227" cy="980" rx="1.2" ry="1.1"/><ellipse cx="773" cy="700" rx="0.5" ry="0.5"/><ellipse cx="1148" cy="914" rx="0.6" ry="0.6"/><ellipse cx="1277" cy="985" rx="1.5" ry="1.4"/><ellipse cx="927" cy="225" rx="1.1" ry="0.9"/><ellipse cx="947" cy="185" rx="0.9" ry="0.9"/><ellipse cx="767" cy="343" rx="1.5" ry="1.7"/><ellipse cx="1256" cy="273" rx="1.0" ry="1.5"/><ellipse cx="810" cy="452" rx="0.7" ry="0.8"/><ellipse cx="1244" cy="877" rx="1.8" ry="2.4"/><ellipse cx="743" cy="957" rx="0.8" ry="1.0"/><ellipse cx="818" cy="140" rx="1.2" ry="0.9"/><ellipse cx="1267" cy="148" rx="1.9" ry="2.8"/><ellipse cx="1189" cy="955" rx="0.8" ry="1.1"/><ellipse cx="794" cy="916" rx="2.6" ry="2.6"/></g><g fill="#b89a6a" opacity=".2"><ellipse cx="958" cy="442" rx="1.0" ry="1.3"/><ellipse cx="1049" cy="483" rx="0.6" ry="1.0"/><ellipse cx="945" cy="794" rx="0.4" ry="0.7"/><ellipse cx="935" cy="324" rx="1.2" ry="1.6"/><ellipse cx="1159" cy="543" rx="1.6" ry="2.1"/><ellipse cx="1101" cy="556" rx="1.2" ry="0.9"/><ellipse cx="889" cy="844" rx="0.6" ry="0.6"/><ellipse cx="1012" cy="822" rx="1.3" ry="1.5"/><ellipse cx="927" cy="845" rx="1.1" ry="1.3"/><ellipse cx="970" cy="289" rx="1.4" ry="1.9"/><ellipse cx="1015" cy="763" rx="1.2" ry="1.3"/><ellipse cx="862" cy="424" rx="0.7" ry="0.8"/></g><g fill="#b89a6a" opacity=".3"><ellipse cx="903" cy="348" rx="1.4" ry="1.6"/><ellipse cx="1144" cy="795" rx="1.6" ry="1.4"/><ellipse cx="1006" cy="383" rx="0.9" ry="0.9"/><ellipse cx="1098" cy="701" rx="1.0" ry="1.5"/><ellipse cx="966" cy="566" rx="1.7" ry="1.7"/><ellipse cx="1162" cy="391" rx="0.7" ry="0.9"/><ellipse cx="1156" cy="626" rx="1.1" ry="1.0"/><ellipse cx="1095" cy="499" rx="0.6" ry="0.8"/><ellipse cx="845" cy="574" rx="1.0" ry="1.0"/><ellipse cx="1127" cy="420" rx="1.9" ry="2.1"/></g><g fill="#b89a6a" opacity=".4"><ellipse cx="854" cy="420" rx="1.5" ry="1.9"/><ellipse cx="1014" cy="534" rx="0.5" ry="0.5"/><ellipse cx="901" cy="475" rx="1.2" ry="1.3"/><ellipse cx="864" cy="868" rx="1.8" ry="2.2"/><ellipse cx="897" cy="566" rx="1.1" ry="1.6"/><ellipse cx="1027" cy="518" rx="1.8" ry="1.7"/><ellipse cx="969" cy="617" rx="1.0" ry="1.5"/></g><g fill="#a98552" opacity=".4"><ellipse cx="995" cy="280" rx="1.8" ry="1.4"/><ellipse cx="1025" cy="759" rx="1.4" ry="2.0"/><ellipse cx="1165" cy="451" rx="1.0" ry="0.9"/><ellipse cx="1148" cy="565" rx="0.7" ry="0.8"/><ellipse cx="1062" cy="710" rx="1.2" ry="1.2"/><ellipse cx="953" cy="517" rx="1.1" ry="1.3"/><ellipse cx="1096" cy="319" rx="1.3" ry="1.2"/><ellipse cx="851" cy="807" rx="1.0" ry="1.0"/><ellipse cx="1070" cy="834" rx="1.0" ry="1.3"/><ellipse cx="1056" cy="530" rx="1.3" ry="1.5"/><ellipse cx="851" cy="559" rx="0.9" ry="1.1"/></g>
</g>
<rect x="713" y="120.5" width="586" height="882.5" fill="none" stroke="#ea3a22" stroke-width="2"/>
<rect x="732.5" y="140.5" width="546.5" height="843" fill="none" stroke="#0a0a0a" stroke-width="1.2"/>
<circle cx="1003" cy="207" r="35.5" fill="#dcc93c" opacity="0.72"/>
<circle cx="1002.5" cy="221" r="21.5" fill="#d9c028" opacity="0.95"/>
<polygon points="1000,242 984,302 1020,295" fill="#ce3f3d" opacity="0.88"/><polygon points="969,290 947.5,323.5 982,311" fill="#ce3f3d" opacity="0.64"/><polygon points="951,334.5 985,314 972,341" fill="#ce3f3d" opacity="0.64"/><polygon points="991.7,301.5 1023.8,350 983,341.5" fill="#ce3f3d" opacity="0.64"/><polygon points="987,305 953.5,366 983,374" fill="#ce3f3d" opacity="0.88"/><polygon points="996,330 983,375.5 997,367" fill="#ce3f3d" opacity="0.64"/><polygon points="987,376.5 1028,348.5 1042.5,345.5 1078,395 1036,370" fill="#ce3f3d" opacity="0.88"/><polygon points="953.8,368.5 931,397 990.8,390.8" fill="#ce3f3d" opacity="0.64"/><polygon points="970.5,382 1055.5,384.5 1030,403" fill="#ce3f3d" opacity="0.64"/><polygon points="935,377.5 914,403.5 946,406" fill="#ce3f3d" opacity="0.64"/><polygon points="995,366 974,499 1012,515" fill="#ce3f3d" opacity="0.88"/><polygon points="918,418 1020,398 968,436" fill="#ce3f3d" opacity="0.88"/><polygon points="960,400 948,414 975,408" fill="#ce3f3d" opacity="0.64"/><polygon points="947.5,427.5 870,525 935,527.5" fill="#ce3f3d" opacity="0.64"/><polygon points="929,486 976,442 992,472" fill="#ce3f3d" opacity="0.88"/><polygon points="1020,438.5 1088,413.5 1035,503" fill="#ce3f3d" opacity="0.88"/><polygon points="1065,457.5 1106,490 1079,506" fill="#ce3f3d" opacity="0.88"/><polygon points="1032,397 1075,495 1005,455" fill="#ce3f3d" opacity="0.64"/><polygon points="1012.5,502.5 1106,491 1075,530" fill="#ce3f3d" opacity="0.64"/><polygon points="1005,410 1012,440 992,470" fill="#ce3f3d" opacity="0.64"/><polygon points="1062,537 1104,520 1145,597 1136,599 1060,556" fill="#ce3f3d" opacity="0.88"/><polygon points="945,554 1020,511 1007,540 990,572.5" fill="#ce3f3d" opacity="0.88"/><polygon points="882.5,540 930,520 925,565" fill="#ce3f3d" opacity="0.64"/><polygon points="870,525 935,527 860,565" fill="#ce3f3d" opacity="0.64"/><polygon points="862.5,579 965,592.5 902.5,621" fill="#ce3f3d" opacity="0.88"/><polygon points="996,540 1030,595 997.5,610" fill="#ce3f3d" opacity="0.88"/><polygon points="1095,571 1022.5,624 1130,645" fill="#ce3f3d" opacity="0.88"/><polygon points="950,530 975,585 950,585" fill="#ce3f3d" opacity="0.64"/><polygon points="1000,520 1040,560 1010,575" fill="#ce3f3d" opacity="0.64"/><polygon points="824,645 888.5,621 906,640" fill="#ce3f3d" opacity="0.64"/><polygon points="827.5,686 871,638 988,653" fill="#ce3f3d" opacity="0.64"/><polygon points="871,629 1021,646 919.5,714" fill="#ce3f3d" opacity="0.88"/><polygon points="928.8,677 1019.2,646.3 1074,691.5 1052,713 984.6,693.5" fill="#ce3f3d" opacity="0.88"/><polygon points="882,706 948,733 833,790" fill="#ce3f3d" opacity="0.88"/><polygon points="833,710.5 904,697 910.5,764" fill="#ce3f3d" opacity="0.64"/><polygon points="1004.8,687.7 906,807 1023,772" fill="#ce3f3d" opacity="0.88"/><polygon points="1021,646 1129.5,766 1085,817" fill="#ce3f3d" opacity="0.88"/><polygon points="957,806 1021,748 1114,796" fill="#ce3f3d" opacity="0.64"/><polygon points="857.5,781.5 913,754 962.5,817" fill="#ce3f3d" opacity="0.64"/><polygon points="1074,719.5 1127,664 1184,671" fill="#ce3f3d" opacity="0.88"/><polygon points="1021,626.5 1114,600 1163,699.5 1083,655" fill="#ce3f3d" opacity="0.88"/><polygon points="1106,734 1142,706 1178,772" fill="#ce3f3d" opacity="0.88"/><polygon points="1087.5,717 1180,719.5 1143,697" fill="#ce3f3d" opacity="0.64"/><polygon points="1067,651 1113,676 1127.5,794.5" fill="#ce3f3d" opacity="0.64"/><polygon points="1023,633.8 1075,691.5 1019.2,647.3" fill="#ce3f3d" opacity="0.64"/><polygon points="990,600 1060,620 950,665" fill="#ce3f3d" opacity="0.64"/><polygon points="900,600 960,640 880,640" fill="#ce3f3d" opacity="0.64"/><polygon points="857,566 922.5,520 983,593" fill="#ce3f3d" opacity="0.64"/><polygon points="881,538.5 922.5,547 904,582.5" fill="#ce3f3d" opacity="0.64"/><polygon points="887,622 960,645 947.5,668" fill="#ce3f3d" opacity="0.64"/><polygon points="961,500 977.5,580 950,585" fill="#ce3f3d" opacity="0.64"/><polygon points="997.5,568 942,632.5 999.5,636.5" fill="#ce3f3d" opacity="0.64"/><polygon points="1006,549 1052,601 1003,611.5" fill="#ce3f3d" opacity="0.64"/><polygon points="1107,584.5 1164,701 1068,653" fill="#ce3f3d" opacity="0.64"/><polygon points="1018,645 1074,692 1058,705 997,650" fill="#ce3f3d" opacity="0.64"/><polygon points="1012,500 1040,526 1015,535" fill="#ce3f3d" opacity="0.64"/><circle cx="1032" cy="333" r="15.5" fill="#d9bd1f" opacity="0.84"/><circle cx="904" cy="414.5" r="15.5" fill="#d9bd1f" opacity="0.84"/><circle cx="1088" cy="413" r="15.5" fill="#d9bd1f" opacity="0.84"/><circle cx="950.5" cy="517.5" r="15.5" fill="#d9bd1f" opacity="0.84"/><circle cx="1047.5" cy="544" r="15.5" fill="#d9bd1f" opacity="0.84"/><circle cx="1150" cy="603" r="15.5" fill="#d9bd1f" opacity="0.84"/><circle cx="827.5" cy="643" r="15.5" fill="#d9bd1f" opacity="0.84"/><circle cx="1018" cy="733.5" r="15.5" fill="#d9bd1f" opacity="0.84"/><circle cx="1181.5" cy="774.5" r="15.5" fill="#d9bd1f" opacity="0.84"/><circle cx="830" cy="793.5" r="15.5" fill="#d9bd1f" opacity="0.84"/>
<ellipse cx="765.0" cy="968" rx="3" ry="2.4" fill="#d94e49"/><ellipse cx="784.2" cy="968" rx="3" ry="2.4" fill="#d94e49"/><ellipse cx="803.3" cy="968" rx="3" ry="2.4" fill="#d94e49"/><ellipse cx="822.5" cy="968" rx="3" ry="2.4" fill="#d94e49"/><ellipse cx="841.6" cy="968" rx="3" ry="2.4" fill="#d94e49"/><ellipse cx="860.8" cy="968" rx="3" ry="2.4" fill="#d94e49"/><ellipse cx="880.0" cy="968" rx="3" ry="2.4" fill="#d94e49"/><ellipse cx="899.1" cy="968" rx="3" ry="2.4" fill="#d94e49"/><ellipse cx="918.3" cy="968" rx="3" ry="2.4" fill="#d94e49"/><ellipse cx="937.4" cy="968" rx="3" ry="2.4" fill="#d94e49"/><ellipse cx="956.6" cy="968" rx="3" ry="2.4" fill="#d94e49"/><ellipse cx="975.8" cy="968" rx="3" ry="2.4" fill="#d94e49"/><ellipse cx="994.9" cy="968" rx="3" ry="2.4" fill="#d94e49"/><ellipse cx="1014.1" cy="968" rx="3" ry="2.4" fill="#d94e49"/><ellipse cx="1033.2" cy="968" rx="3" ry="2.4" fill="#d94e49"/><ellipse cx="1052.4" cy="968" rx="3" ry="2.4" fill="#d94e49"/><ellipse cx="1071.6" cy="968" rx="3" ry="2.4" fill="#d94e49"/><ellipse cx="1090.7" cy="968" rx="3" ry="2.4" fill="#d94e49"/><ellipse cx="1109.9" cy="968" rx="3" ry="2.4" fill="#d94e49"/><ellipse cx="1129.0" cy="968" rx="3" ry="2.4" fill="#d94e49"/><ellipse cx="1148.2" cy="968" rx="3" ry="2.4" fill="#d94e49"/><ellipse cx="1167.4" cy="968" rx="3" ry="2.4" fill="#d94e49"/><ellipse cx="1186.5" cy="968" rx="3" ry="2.4" fill="#d94e49"/><ellipse cx="1205.7" cy="968" rx="3" ry="2.4" fill="#d94e49"/><ellipse cx="1224.8" cy="968" rx="3" ry="2.4" fill="#d94e49"/><ellipse cx="1244.0" cy="968" rx="3" ry="2.4" fill="#d94e49"/>
<text x="757" y="884" textLength="492" lengthAdjust="spacingAndGlyphs" font-family="Liberation Serif, serif" font-style="italic" font-weight="bold" font-size="77" fill="#c9404a" stroke="#c9404a" stroke-width="1.2" stroke-linejoin="round">Frohe Weihnachten!</text>
</svg>


<div class="a tb"></div><div class="a tbh"></div>
<div class="a dock" style="left:1882px;top:65px;width:38px;height:975px;background:#484848"></div>
<svg class="a" style="left:0;top:0" width="1920" height="1040" viewBox="0 0 1920 1040">
<path d="M5 67.500v6l3.500-3zM9.500 67.500v6l3.500-3z" fill="#d0d0d0"/>
<path d="M10.5 79v4M12.5 79v4M14.5 79v4M16.5 79v4M18.5 79v4M20.5 79v4M22.5 79v4M24.5 79v4M26.5 79v4M28.5 79v4" stroke="#1c1c1c" stroke-width="1"/>
<rect x="6.500" y="94.500" width="27" height="21" fill="#363636" stroke="#2a2a2a"/><path d="M15.500 97v14.500l3.500-3.300 2.300 5 2-.900-2.300-4.900h4.700z" fill="#3a3a3a" stroke="#ececec" stroke-width="1.200" stroke-linejoin="round"/><path d="M15.500 121v14.500l3.500-3.300 2.300 5 2-.900-2.300-4.900h4.700z" fill="#e4e4e4"/><path d="M35 138v3.500h-3.500z" fill="#d8d8d8"/><path d="M18 151l9 9" stroke="#d8d8d8" stroke-width="2.200"/><path d="M16 144v4M16 152v4M10 150h4M18 150h4M12 146l2.500 2.500M20 146l-2.500 2.500M12 154l2.500-2.500" stroke="#e6e6e6" stroke-width="1.200"/><path d="M12 176c-2-6 10-9 14-4 2 4-5 7-11 6-2 0-3 2-1 4" fill="none" stroke="#d8d8d8" stroke-width="1.500"/><path d="M19 172v10l2.500-2 1.500 3.500 1.600-.7-1.500-3.400h3.300z" fill="#e8e8e8"/><path d="M35 186v3.500h-3.500z" fill="#d8d8d8"/><path d="M6 189.500h28" stroke="#393939"/><path d="M6 190.500h28" stroke="#555"/><path d="M12 212l2-7 8-7 4.500 4.500-7 8z" fill="#d8d8d8"/><path d="M21 197l3-2.500 5 5-2.500 3z" fill="#bdbdbd"/><circle cx="18.500" cy="205" r="1.300" fill="#474747"/><path d="M12 212l5-5" stroke="#474747" stroke-width="1"/><path d="M35 212v3.500h-3.500z" fill="#d8d8d8"/><text x="13" y="235" font-family="Liberation Serif, serif" font-size="21" fill="#dedede">T</text><path d="M35 236v3.500h-3.500z" fill="#d8d8d8"/><path d="M12 259l15-16" stroke="#dcdcdc" stroke-width="1.500"/><path d="M35 260v3.500h-3.500z" fill="#d8d8d8"/><ellipse cx="19.500" cy="274.500" rx="8" ry="6" fill="#8a8a8a" stroke="#d0d0d0" stroke-width="1.300"/><path d="M35 283v3.500h-3.500z" fill="#d8d8d8"/><path d="M28 289l-10 10-2-2z" fill="#dcdcdc"/><path d="M17 298c-1 4-4 5-7 5 2-1 2-4 4-6z" fill="#dcdcdc"/><path d="M25 314l4 4-11 11-4-4z" fill="#cfcfcf"/><path d="M13 326l4 4-6 2z" fill="#e8e8e8"/><path d="M23 316l4 4" stroke="#474747" stroke-width="1.200"/><path d="M35 332v3.500h-3.500z" fill="#d8d8d8"/><path d="M11 341h12v11H11z" fill="#9a9a9a"/><path d="M29 337l-8 8-2-1.500z" fill="#e4e4e4"/><path d="M20 344c0 3-2 5-6 5 3-1 2-4 4-5.500z" fill="#e4e4e4"/><path d="M11 341h12" stroke="#ddd"/><path d="M11 372l6-8h12l-6 8z" fill="#d8d8d8"/><path d="M11 372v4h12v-4zM23 376l6-8v-4" fill="#9c9c9c"/><path d="M35 380v3.500h-3.500z" fill="#d8d8d8"/><path d="M6 383.500h28" stroke="#393939"/><path d="M6 384.500h28" stroke="#555"/><path d="M13 392a7 7 0 1 0 6-3" fill="none" stroke="#d4d4d4" stroke-width="1.400" stroke-dasharray="2.500 1.800"/><path d="M20 386v6l-5-3z" fill="#e0e0e0"/><path d="M35 407v3.500h-3.500z" fill="#d8d8d8"/><rect x="11.500" y="419.500" width="9" height="9" fill="#7a7a7a" stroke="#d8d8d8"/><rect x="16.500" y="413.500" width="11" height="11" fill="none" stroke="#d8d8d8"/><path d="M21 420l5-5M23 415h3v3" stroke="#e6e6e6" fill="none" stroke-width="1.100"/><path d="M35 431v3.500h-3.500z" fill="#d8d8d8"/><path d="M11 452c5-3 5-14 10-13s3 9 8 7" fill="none" stroke="#d8d8d8" stroke-width="2"/><circle cx="14" cy="448" r="1.800" fill="#474747" stroke="#e0e0e0"/><circle cx="25" cy="441" r="1.800" fill="#474747" stroke="#e0e0e0"/><path d="M35 454v3.500h-3.500z" fill="#d8d8d8"/><path d="M13 460v11l2.500-2.300 1.700 3.600 1.500-.7-1.700-3.500h3.400z" fill="#e4e4e4"/><rect x="17.500" y="462.500" width="10" height="10" fill="none" stroke="#d0d0d0" stroke-dasharray="1.500 1.500"/><rect x="26" y="461" width="3" height="3" fill="#e0e0e0"/><rect x="26" y="471" width="3" height="3" fill="#e0e0e0"/><rect x="16" y="471" width="3" height="3" fill="#e0e0e0"/><circle cx="16" cy="489" r="5" fill="#8a8a8a" stroke="#d4d4d4"/><circle cx="22" cy="492" r="5" fill="none" stroke="#d4d4d4"/><path d="M12 490h9" stroke="#fff" stroke-dasharray="1 1"/><path d="M23 489v10l2.500-2 1.500 3.500 1.600-.7-1.500-3.400h3.300z" fill="#ececec"/><path d="M35 501v3.500h-3.500z" fill="#d8d8d8"/><path d="M12 509v16h16z" fill="none" stroke="#dcdcdc" stroke-width="1.300"/><path d="M12 509l16 16M15 509v13M18.500 512v10M22 516v6M12 521h16M14 517h9" stroke="#dcdcdc" stroke-width="1.300"/><path d="M12 509h4v16h-4z" fill="#d0d0d0"/><path d="M35 525v3.500h-3.500z" fill="#d8d8d8"/><path d="M6 530.500h28" stroke="#393939"/><path d="M6 531.500h28" stroke="#555"/><rect x="12.500" y="536.500" width="15" height="12" fill="#9a9a9a" stroke="#e4e4e4" stroke-width="1.200"/><path d="M12 541c5-3 10 3 16-1M12 545c6-2 9 3 16 0M17 536c3 4-2 8 1 13M23 536c-3 4 3 8 0 13" fill="none" stroke="#f0f0f0" stroke-width="1.100"/><defs><linearGradient id="tg1"><stop offset="0" stop-color="#555"/><stop offset="1" stop-color="#e8e8e8"/></linearGradient></defs><rect x="12.500" y="561.500" width="15" height="11" fill="url(#tg1)" stroke="#e4e4e4" stroke-width="1.200"/><path d="M13 599l1-3 8-8 2 2-8 8z" fill="none" stroke="#dcdcdc" stroke-width="1.300"/><path d="M21 587l3-3c1.500-1.500 4 1 2.500 2.500l-3 3z" fill="#e6e6e6"/><path d="M20 586l5 5" stroke="#e6e6e6" stroke-width="1.800"/><path d="M35 599v3.500h-3.500z" fill="#d8d8d8"/><rect x="11.500" y="607.500" width="8" height="8" fill="#9a9a9a" stroke="#dcdcdc"/><circle cx="21" cy="615" r="3.600" fill="#777" stroke="#dcdcdc"/><circle cx="24.500" cy="617.500" r="3.600" fill="#474747" stroke="#dcdcdc" stroke-width="1.200"/><path d="M6 627.500h28" stroke="#393939"/><path d="M6 628.500h28" stroke="#555"/><rect x="18.500" y="637.500" width="9" height="12" rx="1" fill="#9a9a9a" stroke="#e0e0e0" stroke-width="1.200"/><rect x="20.500" y="633.500" width="5" height="4" fill="#d4d4d4"/><circle cx="23" cy="644" r="2.300" fill="#474747" stroke="#eee"/><path d="M11 634h1M13 633h1M15 634h1M12 636h1M14 636h1M16 636h1M11 638h1M13 638h1M15 638h1" stroke="#e0e0e0" stroke-width="1.200"/><path d="M35 650v3.500h-3.500z" fill="#d8d8d8"/><path d="M12.500 656v17h16" fill="none" stroke="#e0e0e0" stroke-width="1.300"/><rect x="15" y="664" width="3" height="8" fill="#d8d8d8"/><rect x="19.500" y="659" width="3" height="13" fill="#d8d8d8"/><rect x="24" y="662" width="3" height="10" fill="#d8d8d8"/><path d="M35 674v3.500h-3.500z" fill="#d8d8d8"/><path d="M6 677.500h28" stroke="#393939"/><path d="M6 678.500h28" stroke="#555"/><rect x="14.500" y="685.500" width="11" height="10" fill="#7e7e7e" stroke="#e0e0e0"/><path d="M10 685.500h20M10 695.500h20M14.500 681v19M25.500 681v19" stroke="#e0e0e0" stroke-width="1"/><path d="M11 722l14-10 4-1-3 4-10 8z" fill="#d8d8d8"/><path d="M11 722l5-1-2-3z" fill="#9a9a9a"/><path d="M35 725v3.500h-3.500z" fill="#d8d8d8"/><path d="M14 741c-2-3-4-5-2.500-6s3 1.500 4 2.500v-7.500c0-1.600 2.200-1.600 2.200 0v-1.500c0-1.600 2.300-1.600 2.300 0v1.500c0-1.500 2.200-1.500 2.200 0v2c0-1.400 2.100-1.400 2.100 0v8c0 4-2 6-5 6s-4-2-5.300-5z" fill="#dcdcdc"/><path d="M18 736v-5M20.400 736v-6M22.600 736v-5" stroke="#777" stroke-width=".7"/><path d="M35 748v3.500h-3.500z" fill="#d8d8d8"/><circle cx="18" cy="760" r="5" fill="#8a8a8a" stroke="#dedede" stroke-width="1.800"/><path d="M21.500 764l6 6" stroke="#dedede" stroke-width="2.600"/><path d="M6 775.500h28" stroke="#393939"/><path d="M6 776.500h28" stroke="#555"/><rect x="7.500" y="781.500" width="6" height="6" fill="#fff" stroke="#111"/><rect x="10.500" y="784.500" width="6" height="6" fill="none" stroke="#eee" stroke-width="1.400"/><rect x="11.500" y="785.500" width="4" height="4" fill="#111"/><path d="M27 782.500h4.500v5" fill="none" stroke="#e0e0e0" stroke-width="1.300"/><path d="M24.500 782.500l3-2.500v5zM31.500 790l-2.500-3h5z" fill="#e0e0e0"/><rect x="6" y="798" width="18" height="18" fill="#c9404a" stroke="#f4f4f4" stroke-width="1.300"/><rect x="5" y="797" width="20" height="20" fill="none" stroke="#2a2a2a" stroke-width=".800"/><rect x="15.500" y="808" width="18.500" height="18" fill="#fff" stroke="#2a2a2a" stroke-width=".800"/><rect x="21.500" y="813.500" width="7" height="7" fill="#222" stroke="#222"/><path d="M16.500 825l17-16.500" stroke="#e0202a" stroke-width="1.800"/><rect x="7.500" y="834.500" width="7" height="7" fill="#c9404a" stroke="#e8e8e8"/><rect x="9.500" y="836.500" width="3" height="3" fill="#444"/><defs><linearGradient id="tg2"><stop offset="0" stop-color="#fff"/><stop offset="1" stop-color="#222"/></linearGradient></defs><rect x="16.500" y="834.500" width="7" height="7" fill="url(#tg2)" stroke="#333"/><rect x="25.500" y="834.500" width="8" height="7" fill="#fff" stroke="#333"/><path d="M26 841.500l7-7" stroke="#e0202a" stroke-width="1.500"/><circle cx="18.500" cy="855.500" r="3.500" fill="#8a8a8a" stroke="#d8d8d8"/><rect x="19.500" y="856.500" width="5" height="5" fill="#d0d0d0"/><rect x="16.500" y="876.500" width="11" height="8" fill="#6e6e6e" stroke="#dcdcdc" stroke-width="1.200"/><rect x="11.500" y="879.500" width="11" height="8" fill="#555" stroke="#dcdcdc" stroke-width="1.200"/>
<rect x="1882" y="65" width="38" height="12" fill="#2e2e2e"/><path d="M1911 67.500v6l-3.500-3zM1915.500 67.500v6l-3.500-3z" fill="#d0d0d0"/><path d="M1891.5 79v4M1893.5 79v4M1895.5 79v4M1897.5 79v4M1899.5 79v4M1901.5 79v4M1903.5 79v4M1905.5 79v4M1907.5 79v4M1909.5 79v4" stroke="#1c1c1c" stroke-width="1"/><rect x="1893.500" y="95.500" width="15" height="11" fill="#555" stroke="#e0e0e0" stroke-width="1.200"/><path d="M1898.500 95v12M1903.500 95v12M1893 101h16" stroke="#e0e0e0" stroke-width="1.200"/><rect x="1894" y="96" width="4" height="4.500" fill="#cfcfcf"/><rect x="1899" y="96" width="4" height="4.500" fill="#aaa"/><path d="M1892 131c0-6 5-9 10-9s9 3 9 7-3 3-5 3-1 4-5 4-9-1-9-5z" fill="#dcdcdc"/><circle cx="1897" cy="129" r="1.500" fill="#474747"/><circle cx="1901" cy="126" r="1.500" fill="#474747"/><circle cx="1906" cy="127" r="1.500" fill="#474747"/><circle cx="1899" cy="133" r="1.500" fill="#474747"/><defs><linearGradient id="dg1" x1="0" y1="1" x2="1" y2="0"><stop offset="0" stop-color="#444"/><stop offset="1" stop-color="#eee"/></linearGradient></defs><path d="M1894 164v-17c8 0 15 7 15 17z" fill="url(#dg1)" stroke="#dcdcdc" stroke-width="1.200"/><circle cx="1899" cy="185" r="5" fill="none" stroke="#dcdcdc" stroke-width="1.800"/><circle cx="1899" cy="185" r="1.800" fill="#dcdcdc"/><path d="M1901 183l5-5M1902 187l5 4" stroke="#dcdcdc" stroke-width="1.300"/><circle cx="1907" cy="177.500" r="2.200" fill="#e6e6e6"/><circle cx="1908" cy="192" r="2.200" fill="#e6e6e6"/><path d="M1882 201.500h38" stroke="#2e2e2e"/><path d="M1882 202.500h38" stroke="#565656"/><path d="M1891.5 206v4M1893.5 206v4M1895.5 206v4M1897.5 206v4M1899.5 206v4M1901.5 206v4M1903.5 206v4M1905.5 206v4M1907.5 206v4M1909.5 206v4" stroke="#1c1c1c" stroke-width="1"/><path d="M1896 227h10l-1 8h-8z" fill="#cfcfcf"/><path d="M1898 227l-2-8 3 2zM1901 227v-10l2 3zM1904 227l3-7-1 7z" fill="#e6e6e6"/><circle cx="1901" cy="249.500" r="3.800" fill="#e0e0e0"/><circle cx="1896.800" cy="255" r="3.800" fill="#e0e0e0"/><circle cx="1905.200" cy="255" r="3.800" fill="#e0e0e0"/><path d="M1901 253l-3 9h6z" fill="#e0e0e0"/><path d="M1882 270.500h38" stroke="#2e2e2e"/><path d="M1882 271.500h38" stroke="#565656"/><path d="M1891.5 275v4M1893.5 275v4M1895.5 275v4M1897.5 275v4M1899.5 275v4M1901.5 275v4M1903.5 275v4M1905.5 275v4M1907.5 275v4M1909.5 275v4" stroke="#1c1c1c" stroke-width="1"/><path d="M1893 288.500h16" stroke="#e0e0e0" stroke-width="1.200"/><path d="M1893 293.500h16" stroke="#e0e0e0" stroke-width="2"/><path d="M1893 299h16" stroke="#e0e0e0" stroke-width="2.800"/><defs><linearGradient id="dg2"><stop offset="0" stop-color="#3e3e3e"/><stop offset="1" stop-color="#f0f0f0"/></linearGradient></defs><rect x="1893.500" y="316.500" width="15" height="11" fill="url(#dg2)" stroke="#dcdcdc" stroke-width="1.200"/><circle cx="1898" cy="348" r="5.500" fill="#d4d4d4"/><circle cx="1903" cy="353" r="5.500" fill="#8e8e8e" stroke="#e6e6e6" stroke-width="1.300"/><path d="M1882 367.500h38" stroke="#2e2e2e"/><path d="M1882 368.500h38" stroke="#565656"/><path d="M1891.5 372v4M1893.5 372v4M1895.5 372v4M1897.5 372v4M1899.5 372v4M1901.5 372v4M1903.5 372v4M1905.5 372v4M1907.5 372v4M1909.5 372v4" stroke="#1c1c1c" stroke-width="1"/><circle cx="1901" cy="391.500" r="7.500" fill="none" stroke="#dcdcdc" stroke-width="1.100" stroke-dasharray="2 1.500"/><circle cx="1901" cy="391.500" r="5" fill="#cfcfcf"/><rect x="1896.500" y="412.500" width="12" height="12" fill="none" stroke="#dcdcdc" stroke-width="1.200"/><rect x="1893.500" y="421.500" width="5" height="5" fill="#474747" stroke="#dcdcdc" stroke-width="1.200"/><rect x="1896.500" y="424.500" width="4" height="4" fill="#474747" stroke="#dcdcdc"/><rect x="1894" y="441" width="9" height="9" fill="#d8d8d8"/><rect x="1899.500" y="446.500" width="9" height="9" fill="#8e8e8e" stroke="#d8d8d8" stroke-width="1.200"/><rect x="1897" y="444" width="6" height="6" fill="#bdbdbd"/><path d="M1882 464.500h38" stroke="#2e2e2e"/><path d="M1882 465.500h38" stroke="#565656"/><path d="M1891.5 469v4M1893.5 469v4M1895.5 469v4M1897.5 469v4M1899.5 469v4M1901.5 469v4M1903.5 469v4M1905.5 469v4M1907.5 469v4M1909.5 469v4" stroke="#1c1c1c" stroke-width="1"/><rect x="1894.500" y="482.500" width="13" height="12" fill="#7e7e7e" stroke="#e0e0e0" stroke-dasharray="2 1.500" stroke-width="1.200"/><rect x="1893" y="481" width="3" height="3" fill="#eee"/><rect x="1906" y="481" width="3" height="3" fill="#eee"/><rect x="1893" y="493" width="3" height="3" fill="#eee"/><rect x="1906" y="493" width="3" height="3" fill="#eee"/><rect x="1900.500" y="488" width="1" height="1" fill="#eee"/><path d="M1894.500 508v17" stroke="#e0e0e0" stroke-width="1.300"/><rect x="1896" y="510" width="8" height="5" fill="#cfcfcf"/><rect x="1896" y="518" width="13" height="5" fill="#cfcfcf"/><path d="M1882 534.500h38" stroke="#2e2e2e"/><path d="M1882 535.500h38" stroke="#565656"/><path d="M1891.5 539v4M1893.5 539v4M1895.5 539v4M1897.5 539v4M1899.5 539v4M1901.5 539v4M1903.5 539v4M1905.5 539v4M1907.5 539v4M1909.5 539v4" stroke="#1c1c1c" stroke-width="1"/><circle cx="1901" cy="557.500" r="7" fill="#cfcfcf"/><path d="M1901 549v-3M1901 566v3M1909.500 557.500h3" stroke="#cfcfcf" stroke-width="2"/><path d="M1901 550.500a7 7 0 0 0 0 14z" fill="#8a8a8a"/><path d="M1882 575.500h38" stroke="#2e2e2e"/><path d="M1882 576.500h38" stroke="#565656"/><path d="M1891.5 580v4M1893.5 580v4M1895.5 580v4M1897.5 580v4M1899.5 580v4M1901.5 580v4M1903.5 580v4M1905.5 580v4M1907.5 580v4M1909.5 580v4" stroke="#1c1c1c" stroke-width="1"/><text x="1893" y="605" font-family="Liberation Sans, sans-serif" font-size="17" fill="#e0e0e0">A</text><path d="M1907.500 590v17" stroke="#e0e0e0" stroke-width="1.200"/><text x="1893.500" y="633" font-family="Liberation Sans, sans-serif" font-size="18" font-weight="bold" fill="#e0e0e0">¶</text><text x="1894" y="661" font-family="Liberation Serif, serif" font-style="italic" font-weight="bold" font-size="21" fill="#e0e0e0">O</text><path d="M1882 671.500h38" stroke="#2e2e2e"/><path d="M1882 672.500h38" stroke="#565656"/>
</svg>


<div class="a lp"></div><div class="a lph"></div><div class="a lpt"></div><div class="a lptab"></div>
<svg class="a" style="left:1834px;top:106px" width="32" height="10"><path d="M9 1v7l-4-3.500zM14 1v7l-4-3.500z" fill="#d8d8d8"/><path d="M22 1.500l6 6M28 1.500l-6 6" stroke="#d8d8d8" stroke-width="1.600"/></svg>
<div class="lt" style="left:1574px;top:120px;font-weight:bold;color:#e8e8e8;letter-spacing:-0.2px">Ebenen</div>
<svg class="a" style="left:1848px;top:121px" width="16" height="10"><path d="M0 2h4.500l-2.250 3z" fill="#d0d0d0"/><path d="M5.500 1.500h9M5.500 4.500h9M5.500 7.500h9" stroke="#d0d0d0" stroke-width="1.300"/></svg>
<div class="a lpl"></div>
<div class="lr" style="top:141px;background:#555;"><svg style="left:3px;top:5px" width="14" height="10" viewBox="0 0 14 10"><path d="M0.6 5Q7 -2.2 13.4 5Q7 11.2 0.6 5z" fill="#5a5a5a" stroke="#dedede" stroke-width="1.1"/><circle cx="7" cy="4.8" r="2.7" fill="#e4e4e4"/><circle cx="7" cy="4.8" r="1.2" fill="#3a3a3a"/></svg><i style="left:21px;width:1px;background:#3c3c3c"></i><i style="left:42px;width:1px;background:#3c3c3c"></i><i style="left:43px;width:5px;background:#1f8c5f"></i><i style="left:253px;width:1px;background:#3c3c3c"></i><i style="left:284px;width:4px;background:#585858"></i><svg style="left:258px;top:5px" width="11" height="11"><circle cx="5.500" cy="5.500" r="4" fill="none" stroke="#1e1e1e" stroke-width="1.100"/></svg></div><svg class="a" style="left:1624px;top:148px" width="10" height="8"><path d="M0.500 0.500h9l-4.500 7z" fill="#e6e6e6"/></svg><div class="th" style="left:1642px;top:142px;background:linear-gradient(90deg,#c99a62,#f1e3c2 35%,#f1e3c2 65%,#c99a62);"><svg width="16" height="16" style="left:0;top:0"><path d="M8 2l-4 10h8z" fill="#c9404a"/><rect x="4" y="13" width="8" height="1" fill="#c9404a"/></svg></div><div class="lt" style="left:1665px;top:145px">Meine Ebene</div><div class="lr" style="top:162px;"><svg style="left:3px;top:5px" width="14" height="10" viewBox="0 0 14 10"><path d="M0.6 5Q7 -2.2 13.4 5Q7 11.2 0.6 5z" fill="#5a5a5a" stroke="#dedede" stroke-width="1.1"/><circle cx="7" cy="4.8" r="2.7" fill="#e4e4e4"/><circle cx="7" cy="4.8" r="1.2" fill="#3a3a3a"/></svg><i style="left:21px;width:1px;background:#3c3c3c"></i><i style="left:42px;width:1px;background:#3c3c3c"></i><i style="left:43px;width:5px;background:#1f8c5f"></i><i style="left:253px;width:1px;background:#3c3c3c"></i><i style="left:284px;width:4px;background:#585858"></i><svg style="left:258px;top:5px" width="11" height="11"><circle cx="5.500" cy="5.500" r="4" fill="none" stroke="#1e1e1e" stroke-width="1.100"/></svg></div><svg class="a" style="left:1646px;top:167px" width="8" height="10"><path d="M0.500 0.500v9l6.500-4.500z" fill="#e6e6e6"/></svg><div class="th" style="left:1662px;top:163px;"><svg width="16" height="16" style="left:0;top:0"><path d="M8 1l-5 14h10z" fill="#d0505a"/><path d="M8 1l-2.500 7h5z" fill="#c9404a"/></svg></div><div class="lt" style="left:1685px;top:166px">Baum</div><div class="lr sel" style="top:183px;"><svg style="left:3px;top:5px" width="14" height="10" viewBox="0 0 14 10"><path d="M0.6 5Q7 -2.2 13.4 5Q7 11.2 0.6 5z" fill="#5a5a5a" stroke="#dedede" stroke-width="1.1"/><circle cx="7" cy="4.8" r="2.7" fill="#e4e4e4"/><circle cx="7" cy="4.8" r="1.2" fill="#3a3a3a"/></svg><i style="left:21px;width:1px;background:#3c3c3c"></i><i style="left:42px;width:1px;background:#3c3c3c"></i><i style="left:43px;width:5px;background:#1f8c5f"></i><i style="left:253px;width:1px;background:#3c3c3c"></i><i style="left:284px;width:4px;background:#585858"></i><svg style="left:258px;top:5px" width="11" height="11"><circle cx="5.500" cy="5.500" r="4" fill="none" stroke="#1e1e1e" stroke-width="1.100"/></svg></div><div class="a" style="left:1573px;top:183px;width:42px;height:20px;background:#68758b;opacity:.55"></div><div class="a" style="left:1573px;top:183px;width:288px;height:20px"><svg style="left:3px;top:5px" width="14" height="10" viewBox="0 0 14 10"><path d="M0.6 5Q7 -2.2 13.4 5Q7 11.2 0.6 5z" fill="#5a5a5a" stroke="#dedede" stroke-width="1.1"/><circle cx="7" cy="4.8" r="2.7" fill="#e4e4e4"/><circle cx="7" cy="4.8" r="1.2" fill="#3a3a3a"/></svg></div><svg class="a" style="left:1644px;top:190px" width="10" height="8"><path d="M0.500 0.500h9l-4.500 7z" fill="#e6e6e6"/></svg><div class="th" style="left:1662px;top:184px;"><svg width="16" height="16" style="left:0;top:0"><rect x="0" y="7" width="16" height="2" fill="#c9404a"/></svg></div><div class="lt" style="left:1685px;top:187px">Text</div><div class="lr" style="top:204px;"><svg style="left:3px;top:5px" width="14" height="10" viewBox="0 0 14 10"><path d="M0.6 5Q7 -2.2 13.4 5Q7 11.2 0.6 5z" fill="#5a5a5a" stroke="#dedede" stroke-width="1.1"/><circle cx="7" cy="4.8" r="2.7" fill="#e4e4e4"/><circle cx="7" cy="4.8" r="1.2" fill="#3a3a3a"/></svg><i style="left:21px;width:1px;background:#3c3c3c"></i><i style="left:42px;width:1px;background:#3c3c3c"></i><i style="left:43px;width:5px;background:#1f8c5f"></i><i style="left:253px;width:1px;background:#3c3c3c"></i><i style="left:284px;width:4px;background:#585858"></i><svg style="left:258px;top:5px" width="11" height="11"><circle cx="5.500" cy="5.500" r="4" fill="none" stroke="#1e1e1e" stroke-width="1.100"/></svg></div><div class="th" style="left:1682px;top:205px;"><span style="display:block;font-size:17px;line-height:16px;margin-left:-1px">!</span></div><div class="lt" style="left:1706px;top:208px">&lt;Zusammengese...</div><div class="lr" style="top:225px;"><svg style="left:3px;top:5px" width="14" height="10" viewBox="0 0 14 10"><path d="M0.6 5Q7 -2.2 13.4 5Q7 11.2 0.6 5z" fill="#5a5a5a" stroke="#dedede" stroke-width="1.1"/><circle cx="7" cy="4.8" r="2.7" fill="#e4e4e4"/><circle cx="7" cy="4.8" r="1.2" fill="#3a3a3a"/></svg><i style="left:21px;width:1px;background:#3c3c3c"></i><i style="left:42px;width:1px;background:#3c3c3c"></i><i style="left:43px;width:5px;background:#1f8c5f"></i><i style="left:253px;width:1px;background:#3c3c3c"></i><i style="left:284px;width:4px;background:#585858"></i><svg style="left:258px;top:5px" width="11" height="11"><circle cx="5.500" cy="5.500" r="4" fill="none" stroke="#1e1e1e" stroke-width="1.100"/></svg></div><div class="th" style="left:1682px;top:226px;"><span style="display:block;font-size:20px;line-height:13px;margin-left:-1px">n</span></div><div class="lt" style="left:1706px;top:229px">&lt;Zusammengese...</div><div class="lr" style="top:246px;"><svg style="left:3px;top:5px" width="14" height="10" viewBox="0 0 14 10"><path d="M0.6 5Q7 -2.2 13.4 5Q7 11.2 0.6 5z" fill="#5a5a5a" stroke="#dedede" stroke-width="1.1"/><circle cx="7" cy="4.8" r="2.7" fill="#e4e4e4"/><circle cx="7" cy="4.8" r="1.2" fill="#3a3a3a"/></svg><i style="left:21px;width:1px;background:#3c3c3c"></i><i style="left:42px;width:1px;background:#3c3c3c"></i><i style="left:43px;width:5px;background:#1f8c5f"></i><i style="left:253px;width:1px;background:#3c3c3c"></i><i style="left:284px;width:4px;background:#585858"></i><svg style="left:258px;top:5px" width="11" height="11"><circle cx="5.500" cy="5.500" r="4" fill="none" stroke="#1e1e1e" stroke-width="1.100"/></svg></div><div class="th" style="left:1682px;top:247px;"><span style="display:block;font-size:20px;line-height:13px;margin-left:-1px">e</span></div><div class="lt" style="left:1706px;top:250px">&lt;Zusammengese...</div><div class="lr" style="top:267px;"><svg style="left:3px;top:5px" width="14" height="10" viewBox="0 0 14 10"><path d="M0.6 5Q7 -2.2 13.4 5Q7 11.2 0.6 5z" fill="#5a5a5a" stroke="#dedede" stroke-width="1.1"/><circle cx="7" cy="4.8" r="2.7" fill="#e4e4e4"/><circle cx="7" cy="4.8" r="1.2" fill="#3a3a3a"/></svg><i style="left:21px;width:1px;background:#3c3c3c"></i><i style="left:42px;width:1px;background:#3c3c3c"></i><i style="left:43px;width:5px;background:#1f8c5f"></i><i style="left:253px;width:1px;background:#3c3c3c"></i><i style="left:284px;width:4px;background:#585858"></i><svg style="left:258px;top:5px" width="11" height="11"><circle cx="5.500" cy="5.500" r="4" fill="none" stroke="#1e1e1e" stroke-width="1.100"/></svg></div><div class="th" style="left:1682px;top:268px;"><span style="display:block;font-size:18px;line-height:15px;margin-left:-1px">t</span></div><div class="lt" style="left:1706px;top:271px">&lt;Zusammengese...</div><div class="lr" style="top:288px;"><svg style="left:3px;top:5px" width="14" height="10" viewBox="0 0 14 10"><path d="M0.6 5Q7 -2.2 13.4 5Q7 11.2 0.6 5z" fill="#5a5a5a" stroke="#dedede" stroke-width="1.1"/><circle cx="7" cy="4.8" r="2.7" fill="#e4e4e4"/><circle cx="7" cy="4.8" r="1.2" fill="#3a3a3a"/></svg><i style="left:21px;width:1px;background:#3c3c3c"></i><i style="left:42px;width:1px;background:#3c3c3c"></i><i style="left:43px;width:5px;background:#1f8c5f"></i><i style="left:253px;width:1px;background:#3c3c3c"></i><i style="left:284px;width:4px;background:#585858"></i><svg style="left:258px;top:5px" width="11" height="11"><circle cx="5.500" cy="5.500" r="4" fill="none" stroke="#1e1e1e" stroke-width="1.100"/></svg></div><div class="th" style="left:1682px;top:289px;"><span style="display:block;font-size:18px;line-height:15px;margin-left:-1px">h</span></div><div class="lt" style="left:1706px;top:292px">&lt;Zusammengese...</div><div class="lr" style="top:309px;"><svg style="left:3px;top:5px" width="14" height="10" viewBox="0 0 14 10"><path d="M0.6 5Q7 -2.2 13.4 5Q7 11.2 0.6 5z" fill="#5a5a5a" stroke="#dedede" stroke-width="1.1"/><circle cx="7" cy="4.8" r="2.7" fill="#e4e4e4"/><circle cx="7" cy="4.8" r="1.2" fill="#3a3a3a"/></svg><i style="left:21px;width:1px;background:#3c3c3c"></i><i style="left:42px;width:1px;background:#3c3c3c"></i><i style="left:43px;width:5px;background:#1f8c5f"></i><i style="left:253px;width:1px;background:#3c3c3c"></i><i style="left:284px;width:4px;background:#585858"></i><svg style="left:258px;top:5px" width="11" height="11"><circle cx="5.500" cy="5.500" r="4" fill="none" stroke="#1e1e1e" stroke-width="1.100"/></svg></div><div class="th" style="left:1682px;top:310px;"><span style="display:block;font-size:20px;line-height:13px;margin-left:-1px">c</span></div><div class="lt" style="left:1706px;top:313px">&lt;Zusammengese...</div><div class="lr" style="top:330px;"><svg style="left:3px;top:5px" width="14" height="10" viewBox="0 0 14 10"><path d="M0.6 5Q7 -2.2 13.4 5Q7 11.2 0.6 5z" fill="#5a5a5a" stroke="#dedede" stroke-width="1.1"/><circle cx="7" cy="4.8" r="2.7" fill="#e4e4e4"/><circle cx="7" cy="4.8" r="1.2" fill="#3a3a3a"/></svg><i style="left:21px;width:1px;background:#3c3c3c"></i><i style="left:42px;width:1px;background:#3c3c3c"></i><i style="left:43px;width:5px;background:#1f8c5f"></i><i style="left:253px;width:1px;background:#3c3c3c"></i><i style="left:284px;width:4px;background:#585858"></i><svg style="left:258px;top:5px" width="11" height="11"><circle cx="5.500" cy="5.500" r="4" fill="none" stroke="#1e1e1e" stroke-width="1.100"/></svg></div><div class="th" style="left:1682px;top:331px;"><span style="display:block;font-size:20px;line-height:13px;margin-left:-1px">a</span></div><div class="lt" style="left:1706px;top:334px">&lt;Zusammengese...</div><div class="lr" style="top:351px;"><svg style="left:3px;top:5px" width="14" height="10" viewBox="0 0 14 10"><path d="M0.6 5Q7 -2.2 13.4 5Q7 11.2 0.6 5z" fill="#5a5a5a" stroke="#dedede" stroke-width="1.1"/><circle cx="7" cy="4.8" r="2.7" fill="#e4e4e4"/><circle cx="7" cy="4.8" r="1.2" fill="#3a3a3a"/></svg><i style="left:21px;width:1px;background:#3c3c3c"></i><i style="left:42px;width:1px;background:#3c3c3c"></i><i style="left:43px;width:5px;background:#1f8c5f"></i><i style="left:253px;width:1px;background:#3c3c3c"></i><i style="left:284px;width:4px;background:#585858"></i><svg style="left:258px;top:5px" width="11" height="11"><circle cx="5.500" cy="5.500" r="4" fill="none" stroke="#1e1e1e" stroke-width="1.100"/></svg></div><div class="th" style="left:1682px;top:352px;"><span style="display:block;font-size:20px;line-height:13px;margin-left:-1px">n</span></div><div class="lt" style="left:1706px;top:355px">&lt;Zusammengese...</div><div class="lr" style="top:372px;"><svg style="left:3px;top:5px" width="14" height="10" viewBox="0 0 14 10"><path d="M0.6 5Q7 -2.2 13.4 5Q7 11.2 0.6 5z" fill="#5a5a5a" stroke="#dedede" stroke-width="1.1"/><circle cx="7" cy="4.8" r="2.7" fill="#e4e4e4"/><circle cx="7" cy="4.8" r="1.2" fill="#3a3a3a"/></svg><i style="left:21px;width:1px;background:#3c3c3c"></i><i style="left:42px;width:1px;background:#3c3c3c"></i><i style="left:43px;width:5px;background:#1f8c5f"></i><i style="left:253px;width:1px;background:#3c3c3c"></i><i style="left:284px;width:4px;background:#585858"></i><svg style="left:258px;top:5px" width="11" height="11"><circle cx="5.500" cy="5.500" r="4" fill="none" stroke="#1e1e1e" stroke-width="1.100"/></svg></div><div class="th" style="left:1682px;top:373px;"><span style="display:block;font-size:18px;line-height:15px;margin-left:-1px">h</span></div><div class="lt" style="left:1706px;top:376px">&lt;Zusammengese...</div><div class="lr" style="top:393px;"><svg style="left:3px;top:5px" width="14" height="10" viewBox="0 0 14 10"><path d="M0.6 5Q7 -2.2 13.4 5Q7 11.2 0.6 5z" fill="#5a5a5a" stroke="#dedede" stroke-width="1.1"/><circle cx="7" cy="4.8" r="2.7" fill="#e4e4e4"/><circle cx="7" cy="4.8" r="1.2" fill="#3a3a3a"/></svg><i style="left:21px;width:1px;background:#3c3c3c"></i><i style="left:42px;width:1px;background:#3c3c3c"></i><i style="left:43px;width:5px;background:#1f8c5f"></i><i style="left:253px;width:1px;background:#3c3c3c"></i><i style="left:284px;width:4px;background:#585858"></i><svg style="left:258px;top:5px" width="11" height="11"><circle cx="5.500" cy="5.500" r="4" fill="none" stroke="#1e1e1e" stroke-width="1.100"/></svg></div><div class="th" style="left:1682px;top:394px;"><span style="display:block;font-size:20px;line-height:13px;margin-left:-1px">i</span></div><div class="lt" style="left:1706px;top:397px">&lt;Zusammengese...</div><div class="lr" style="top:414px;"><svg style="left:3px;top:5px" width="14" height="10" viewBox="0 0 14 10"><path d="M0.6 5Q7 -2.2 13.4 5Q7 11.2 0.6 5z" fill="#5a5a5a" stroke="#dedede" stroke-width="1.1"/><circle cx="7" cy="4.8" r="2.7" fill="#e4e4e4"/><circle cx="7" cy="4.8" r="1.2" fill="#3a3a3a"/></svg><i style="left:21px;width:1px;background:#3c3c3c"></i><i style="left:42px;width:1px;background:#3c3c3c"></i><i style="left:43px;width:5px;background:#1f8c5f"></i><i style="left:253px;width:1px;background:#3c3c3c"></i><i style="left:284px;width:4px;background:#585858"></i><svg style="left:258px;top:5px" width="11" height="11"><circle cx="5.500" cy="5.500" r="4" fill="none" stroke="#1e1e1e" stroke-width="1.100"/></svg></div><div class="th" style="left:1682px;top:415px;"><span style="display:block;font-size:20px;line-height:13px;margin-left:-1px">e</span></div><div class="lt" style="left:1706px;top:418px">&lt;Zusammengese...</div><div class="lr" style="top:435px;"><svg style="left:3px;top:5px" width="14" height="10" viewBox="0 0 14 10"><path d="M0.6 5Q7 -2.2 13.4 5Q7 11.2 0.6 5z" fill="#5a5a5a" stroke="#dedede" stroke-width="1.1"/><circle cx="7" cy="4.8" r="2.7" fill="#e4e4e4"/><circle cx="7" cy="4.8" r="1.2" fill="#3a3a3a"/></svg><i style="left:21px;width:1px;background:#3c3c3c"></i><i style="left:42px;width:1px;background:#3c3c3c"></i><i style="left:43px;width:5px;background:#1f8c5f"></i><i style="left:253px;width:1px;background:#3c3c3c"></i><i style="left:284px;width:4px;background:#585858"></i><svg style="left:258px;top:5px" width="11" height="11"><circle cx="5.500" cy="5.500" r="4" fill="none" stroke="#1e1e1e" stroke-width="1.100"/></svg></div><div class="th" style="left:1682px;top:436px;"><span style="display:block;font-size:13px;line-height:15px;margin-left:-1px">W</span></div><div class="lt" style="left:1706px;top:439px">&lt;Zusammengese...</div><div class="lr" style="top:456px;"><svg style="left:3px;top:5px" width="14" height="10" viewBox="0 0 14 10"><path d="M0.6 5Q7 -2.2 13.4 5Q7 11.2 0.6 5z" fill="#5a5a5a" stroke="#dedede" stroke-width="1.1"/><circle cx="7" cy="4.8" r="2.7" fill="#e4e4e4"/><circle cx="7" cy="4.8" r="1.2" fill="#3a3a3a"/></svg><i style="left:21px;width:1px;background:#3c3c3c"></i><i style="left:42px;width:1px;background:#3c3c3c"></i><i style="left:43px;width:5px;background:#1f8c5f"></i><i style="left:253px;width:1px;background:#3c3c3c"></i><i style="left:284px;width:4px;background:#585858"></i><svg style="left:258px;top:5px" width="11" height="11"><circle cx="5.500" cy="5.500" r="4" fill="none" stroke="#1e1e1e" stroke-width="1.100"/></svg></div><div class="th" style="left:1682px;top:457px;"><span style="display:block;font-size:20px;line-height:13px;margin-left:-1px">e</span></div><div class="lt" style="left:1706px;top:460px">&lt;Zusammengese...</div><div class="lr" style="top:477px;"><svg style="left:3px;top:5px" width="14" height="10" viewBox="0 0 14 10"><path d="M0.6 5Q7 -2.2 13.4 5Q7 11.2 0.6 5z" fill="#5a5a5a" stroke="#dedede" stroke-width="1.1"/><circle cx="7" cy="4.8" r="2.7" fill="#e4e4e4"/><circle cx="7" cy="4.8" r="1.2" fill="#3a3a3a"/></svg><i style="left:21px;width:1px;background:#3c3c3c"></i><i style="left:42px;width:1px;background:#3c3c3c"></i><i style="left:43px;width:5px;background:#1f8c5f"></i><i style="left:253px;width:1px;background:#3c3c3c"></i><i style="left:284px;width:4px;background:#585858"></i><svg style="left:258px;top:5px" width="11" height="11"><circle cx="5.500" cy="5.500" r="4" fill="none" stroke="#1e1e1e" stroke-width="1.100"/></svg></div><div class="th" style="left:1682px;top:478px;"><span style="display:block;font-size:18px;line-height:15px;margin-left:-1px">h</span></div><div class="lt" style="left:1706px;top:481px">&lt;Zusammengese...</div><div class="lr" style="top:498px;"><svg style="left:3px;top:5px" width="14" height="10" viewBox="0 0 14 10"><path d="M0.6 5Q7 -2.2 13.4 5Q7 11.2 0.6 5z" fill="#5a5a5a" stroke="#dedede" stroke-width="1.1"/><circle cx="7" cy="4.8" r="2.7" fill="#e4e4e4"/><circle cx="7" cy="4.8" r="1.2" fill="#3a3a3a"/></svg><i style="left:21px;width:1px;background:#3c3c3c"></i><i style="left:42px;width:1px;background:#3c3c3c"></i><i style="left:43px;width:5px;background:#1f8c5f"></i><i style="left:253px;width:1px;background:#3c3c3c"></i><i style="left:284px;width:4px;background:#585858"></i><svg style="left:258px;top:5px" width="11" height="11"><circle cx="5.500" cy="5.500" r="4" fill="none" stroke="#1e1e1e" stroke-width="1.100"/></svg></div><div class="th" style="left:1682px;top:499px;"><span style="display:block;font-size:20px;line-height:13px;margin-left:-1px">o</span></div><div class="lt" style="left:1706px;top:502px">&lt;Zusammengese...</div><div class="lr" style="top:519px;"><svg style="left:3px;top:5px" width="14" height="10" viewBox="0 0 14 10"><path d="M0.6 5Q7 -2.2 13.4 5Q7 11.2 0.6 5z" fill="#5a5a5a" stroke="#dedede" stroke-width="1.1"/><circle cx="7" cy="4.8" r="2.7" fill="#e4e4e4"/><circle cx="7" cy="4.8" r="1.2" fill="#3a3a3a"/></svg><i style="left:21px;width:1px;background:#3c3c3c"></i><i style="left:42px;width:1px;background:#3c3c3c"></i><i style="left:43px;width:5px;background:#1f8c5f"></i><i style="left:253px;width:1px;background:#3c3c3c"></i><i style="left:284px;width:4px;background:#585858"></i><svg style="left:258px;top:5px" width="11" height="11"><circle cx="5.500" cy="5.500" r="4" fill="none" stroke="#1e1e1e" stroke-width="1.100"/></svg></div><div class="th" style="left:1682px;top:520px;"><span style="display:block;font-size:20px;line-height:13px;margin-left:-1px">r</span></div><div class="lt" style="left:1706px;top:523px">&lt;Zusammengese...</div><div class="lr" style="top:540px;"><svg style="left:3px;top:5px" width="14" height="10" viewBox="0 0 14 10"><path d="M0.6 5Q7 -2.2 13.4 5Q7 11.2 0.6 5z" fill="#5a5a5a" stroke="#dedede" stroke-width="1.1"/><circle cx="7" cy="4.8" r="2.7" fill="#e4e4e4"/><circle cx="7" cy="4.8" r="1.2" fill="#3a3a3a"/></svg><i style="left:21px;width:1px;background:#3c3c3c"></i><i style="left:42px;width:1px;background:#3c3c3c"></i><i style="left:43px;width:5px;background:#1f8c5f"></i><i style="left:253px;width:1px;background:#3c3c3c"></i><i style="left:284px;width:4px;background:#585858"></i><svg style="left:258px;top:5px" width="11" height="11"><circle cx="5.500" cy="5.500" r="4" fill="none" stroke="#1e1e1e" stroke-width="1.100"/></svg></div><div class="th" style="left:1682px;top:541px;"><span style="display:block;font-size:15px;line-height:16px;margin-left:-1px">F</span></div><div class="lt" style="left:1706px;top:544px">&lt;Zusammengese...</div><div class="lr" style="top:561px;"><svg style="left:3px;top:5px" width="14" height="10" viewBox="0 0 14 10"><path d="M0.6 5Q7 -2.2 13.4 5Q7 11.2 0.6 5z" fill="#5a5a5a" stroke="#dedede" stroke-width="1.1"/><circle cx="7" cy="4.8" r="2.7" fill="#e4e4e4"/><circle cx="7" cy="4.8" r="1.2" fill="#3a3a3a"/></svg><i style="left:21px;width:1px;background:#3c3c3c"></i><i style="left:42px;width:1px;background:#3c3c3c"></i><i style="left:43px;width:5px;background:#1f8c5f"></i><i style="left:253px;width:1px;background:#3c3c3c"></i><i style="left:284px;width:4px;background:#585858"></i><svg style="left:258px;top:5px" width="11" height="11"><circle cx="5.500" cy="5.500" r="4" fill="#9a9a9a" stroke="#1e1e1e" stroke-width="1.100"/></svg></div><div class="th" style="left:1662px;top:562px;"><svg width="16" height="16" style="left:0;top:0"><rect x="0" y="10" width="16" height="1" fill="#eee"/></svg></div><div class="lt" style="left:1685px;top:565px">Gestrichelte Linie</div><div class="lr" style="top:582px;"><svg style="left:3px;top:5px" width="14" height="10" viewBox="0 0 14 10"><path d="M0.6 5Q7 -2.2 13.4 5Q7 11.2 0.6 5z" fill="#5a5a5a" stroke="#dedede" stroke-width="1.1"/><circle cx="7" cy="4.8" r="2.7" fill="#e4e4e4"/><circle cx="7" cy="4.8" r="1.2" fill="#3a3a3a"/></svg><svg style="left:26px;top:4px" width="10" height="12" viewBox="0 0 10 12"><path d="M2.5 5.500V3.500a2.500 2.500 0 0 1 5 0V5.500" fill="none" stroke="#c6c6c6" stroke-width="1.500"/><rect x="1" y="5.200" width="8" height="6" rx=".8" fill="#c6c6c6"/><rect x="4.400" y="7" width="1.200" height="2.500" fill="#555"/></svg><i style="left:21px;width:1px;background:#3c3c3c"></i><i style="left:42px;width:1px;background:#3c3c3c"></i><i style="left:43px;width:5px;background:#1f8c5f"></i><i style="left:253px;width:1px;background:#3c3c3c"></i><i style="left:284px;width:4px;background:#585858"></i><svg style="left:258px;top:5px" width="11" height="11"><circle cx="5.500" cy="5.500" r="4" fill="none" stroke="#1e1e1e" stroke-width="1.100"/></svg></div><div class="th" style="left:1662px;top:583px;background:linear-gradient(90deg,#d2b078,#f3e8c8 30%,#f3e8c8 70%,#d2b078);"></div><div class="lt" style="left:1685px;top:586px">&lt;Bild&gt;</div><div class="lr" style="top:603px;"><svg style="left:3px;top:5px" width="14" height="10" viewBox="0 0 14 10"><path d="M0.6 5Q7 -2.2 13.4 5Q7 11.2 0.6 5z" fill="#5a5a5a" stroke="#dedede" stroke-width="1.1"/><circle cx="7" cy="4.8" r="2.7" fill="#e4e4e4"/><circle cx="7" cy="4.8" r="1.2" fill="#3a3a3a"/></svg><i style="left:21px;width:1px;background:#3c3c3c"></i><i style="left:42px;width:1px;background:#3c3c3c"></i><i style="left:43px;width:5px;background:#1f8c5f"></i><i style="left:253px;width:1px;background:#3c3c3c"></i><i style="left:284px;width:4px;background:#585858"></i><svg style="left:258px;top:5px" width="11" height="11"><circle cx="5.500" cy="5.500" r="4" fill="none" stroke="#1e1e1e" stroke-width="1.100"/></svg></div><div class="th" style="left:1662px;top:604px;background:#e8702a;"></div><div class="lt" style="left:1685px;top:607px">&lt;Pfad&gt;</div><div class="lr" style="top:624px;background:#555;"><svg style="left:3px;top:5px" width="14" height="10" viewBox="0 0 14 10"><path d="M0.6 5Q7 -2.2 13.4 5Q7 11.2 0.6 5z" fill="#5a5a5a" stroke="#dedede" stroke-width="1.1"/><circle cx="7" cy="4.8" r="2.7" fill="#e4e4e4"/><circle cx="7" cy="4.8" r="1.2" fill="#3a3a3a"/></svg><svg style="left:26px;top:4px" width="10" height="12" viewBox="0 0 10 12"><path d="M2.5 5.500V3.500a2.500 2.500 0 0 1 5 0V5.500" fill="none" stroke="#c6c6c6" stroke-width="1.500"/><rect x="1" y="5.200" width="8" height="6" rx=".8" fill="#c6c6c6"/><rect x="4.400" y="7" width="1.200" height="2.500" fill="#555"/></svg><i style="left:21px;width:1px;background:#3c3c3c"></i><i style="left:42px;width:1px;background:#3c3c3c"></i><i style="left:43px;width:5px;background:#e8702a"></i><i style="left:253px;width:1px;background:#3c3c3c"></i><i style="left:284px;width:4px;background:#585858"></i><svg style="left:258px;top:5px" width="11" height="11"><circle cx="5.500" cy="5.500" r="4" fill="none" stroke="#1e1e1e" stroke-width="1.100"/></svg></div><svg class="a" style="left:1626px;top:629px" width="8" height="10"><path d="M0.500 0.500v9l6.500-4.500z" fill="#e6e6e6"/></svg><div class="th" style="left:1642px;top:625px;"><svg width="16" height="16" style="left:0;top:0"><rect x="2.500" y="1" width="1" height="14" fill="#bbb"/><rect x="7" y="6" width="4" height="3" fill="#999" opacity=".6"/><rect x="8" y="12" width="3" height="2" fill="#555"/><rect x="6" y="1" width="5" height="1" fill="#c44"/></svg></div><div class="lt" style="left:1665px;top:628px">Vorlage Vorderseite</div><div class="lr" style="top:645px;background:#555;"><svg style="left:3px;top:5px" width="14" height="10" viewBox="0 0 14 10"><path d="M0.6 5Q7 -2.2 13.4 5Q7 11.2 0.6 5z" fill="#5a5a5a" stroke="#dedede" stroke-width="1.1"/><circle cx="7" cy="4.8" r="2.7" fill="#e4e4e4"/><circle cx="7" cy="4.8" r="1.2" fill="#3a3a3a"/></svg><svg style="left:26px;top:4px" width="10" height="12" viewBox="0 0 10 12"><path d="M2.5 5.500V3.500a2.500 2.500 0 0 1 5 0V5.500" fill="none" stroke="#c6c6c6" stroke-width="1.500"/><rect x="1" y="5.200" width="8" height="6" rx=".8" fill="#c6c6c6"/><rect x="4.400" y="7" width="1.200" height="2.500" fill="#555"/></svg><i style="left:21px;width:1px;background:#3c3c3c"></i><i style="left:42px;width:1px;background:#3c3c3c"></i><i style="left:43px;width:5px;background:#e8702a"></i><i style="left:253px;width:1px;background:#3c3c3c"></i><i style="left:284px;width:4px;background:#585858"></i><svg style="left:258px;top:5px" width="11" height="11"><circle cx="5.500" cy="5.500" r="4" fill="none" stroke="#1e1e1e" stroke-width="1.100"/></svg></div><svg class="a" style="left:1626px;top:650px" width="8" height="10"><path d="M0.500 0.500v9l6.500-4.500z" fill="#e6e6e6"/></svg><div class="th" style="left:1642px;top:646px;"><svg width="16" height="16" style="left:0;top:0"><rect x="2.500" y="1" width="1" height="14" fill="#bbb"/><rect x="7" y="6" width="4" height="3" fill="#999" opacity=".6"/><rect x="8" y="12" width="3" height="2" fill="#555"/><rect x="6" y="1" width="5" height="1" fill="#c44"/></svg></div><div class="lt" style="left:1665px;top:649px">Vorlage Rückseite</div>
<svg class="a" style="left:1855px;top:141px" width="6" height="6"><path d="M0 0h6v6z" fill="#e8e8e8"/></svg>
<div class="lt" style="left:1572px;top:726px;color:#e0e0e0">3 Ebenen</div>
<svg class="a" style="left:1720px;top:724px" width="146" height="18">
<circle cx="11.500" cy="6.500" r="3.300" fill="none" stroke="#777" stroke-width="1.200"/><path d="M9.300 9L5.500 13" stroke="#777" stroke-width="1.500"/>
<rect x="30.500" y="3.500" width="7" height="7" fill="none" stroke="#d4d4d4" stroke-width="1.200"/><rect x="34" y="7" width="6" height="6" fill="#4b4b4b" stroke="#d4d4d4" stroke-width="1.200"/>
<path d="M55 3v4h4M57 5l-2 2 2 2" fill="none" stroke="#777" stroke-width="1.100"/><path d="M60 5h8v8h-6v-5" fill="#6e6e6e"/>
<path d="M83 4h10v10h-5v-5h-5z" fill="#e2e2e2"/>
<path d="M109 5.500h10M112 5.500v-2h4v2M110.500 7v7.500h7V7" fill="none" stroke="#d4d4d4" stroke-width="1.300"/><path d="M112.800 8v5.500M115.200 8v5.500" stroke="#d4d4d4" stroke-width="1"/>
<path d="M144 9v1M142 11v1M144 11v1M140 13v1M142 13v1M144 13v1" stroke="#888" stroke-width="1"/>
</svg>
<div class="a" style="left:1567px;top:743px;width:299px;height:1px;background:#2e2e2e"></div>
<svg class="a" style="left:1707px;top:745px" width="20" height="4"><path d="M0.500 0v4M2.500 0v4M4.500 0v4M6.500 0v4M8.500 0v4M10.500 0v4M12.500 0v4M14.500 0v4M16.500 0v4M18.500 0v4" stroke="#1c1c1c" stroke-width="1"/></svg>
<svg class="a" style="left:1560px;top:170px" width="320" height="400"><rect x="12.700" y="11.500" width="287.300" height="377" fill="none" stroke="#ff0000" stroke-width="4.600"/></svg>


<div class="a" style="left:211px;top:3px;width:50px;height:21px;background:#3b3e3e"></div>
<div class="mi" style="left:220px;color:#f0f0f0">Schrift</div>
<div class="a menu"><div class="mgut"></div><div class="mit" style="top:1.5px">Schriftart</div><div class="marr" style="top:8.5px"></div><div class="mit" style="top:23.5px">Zuletzt verwendete Schriften</div><div class="marr" style="top:30.5px"></div><div class="mit" style="top:45.5px">Schriftgrad</div><div class="marr" style="top:52.5px"></div><div class="msep" style="top:70.5px"></div><div class="mit" style="top:75.5px">Glyphen</div><div class="msep" style="top:100.5px"></div><div class="mit" style="top:105.5px">In Flächentext umwandeln</div><div class="mit dis" style="top:127.5px">Flächentextoptionen...</div><div class="mit dis" style="top:149.5px">Pfadtext</div><div class="marr dis" style="top:156.5px"></div><div class="mit dis" style="top:171.5px">Verketteter Text</div><div class="marr dis" style="top:178.5px"></div><div class="msep" style="top:196.5px"></div><div class="mit dis" style="top:201.5px">Überschrift einpassen</div><div class="mit" style="top:223.5px">Schriftart suchen...</div><div class="mit" style="top:245.5px">Groß-/Kleinschreibung ändern</div><div class="marr" style="top:252.5px"></div><div class="mit" style="top:267.5px">Satz-/Sonderzeichen...</div><div class="mhl" style="top:289.5px"></div><div class="mit" style="top:289.5px">In Pfade umwandeln</div><div class="msc" style="top:289.5px">Umschalttaste+Strg+O</div><div class="mit" style="top:311.5px">Optischer Randausgleich</div><div class="msep" style="top:336.5px"></div><div class="mit" style="top:341.5px">Verborgene Zeichen einblenden</div><div class="msc" style="top:341.5px">Alt+Strg+I</div><div class="mit" style="top:363.5px">Textausrichtung</div><div class="marr" style="top:370.5px"></div><div class="msep" style="top:388.5px"></div><div class="mit dis" style="top:393.5px">Alter Text</div><div class="marr dis" style="top:400.5px"></div></div>
<svg class="a" style="left:0;top:0" width="700" height="460"><rect x="210.3" y="2.3" width="51.8" height="20.8" fill="none" stroke="#ff0000" stroke-width="4.6"/><rect x="213.2" y="313.5" width="385.6" height="24.7" rx="1" fill="none" stroke="#ff0000" stroke-width="5.7"/></svg>

</div></body></html>
